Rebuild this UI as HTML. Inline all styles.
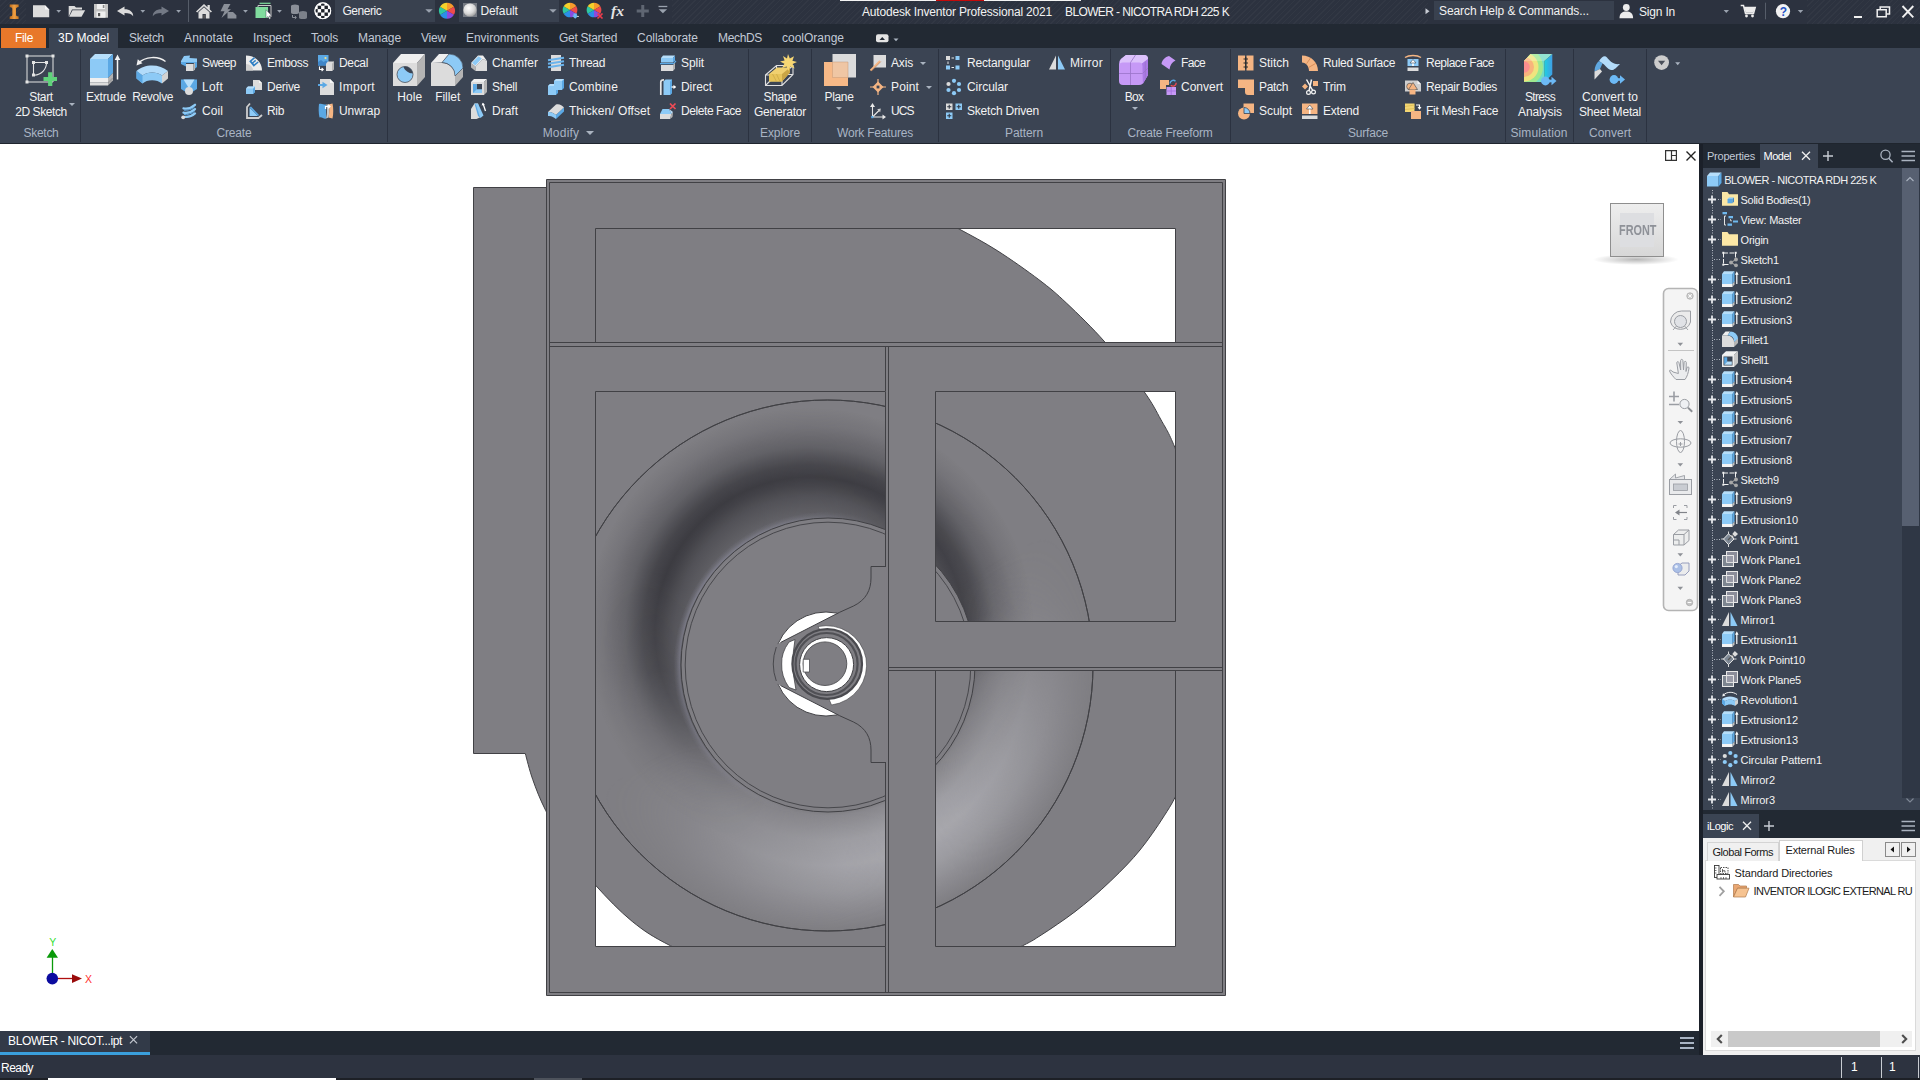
<!DOCTYPE html>
<html><head><meta charset="utf-8"><title>Autodesk Inventor Professional 2021</title>
<style>
html,body{margin:0;padding:0;}
body{width:1920px;height:1080px;overflow:hidden;background:#fff;position:relative;font-family:"Liberation Sans",sans-serif;}
#root{position:absolute;left:0;top:0;width:1920px;height:1080px;overflow:hidden;}
#root div,#root span,#root svg{position:absolute;display:block;}
#root span{white-space:nowrap;}
</style></head><body><div id="root">
<div style="left:0px;top:144px;width:1699px;height:887px;background:#ffffff;"></div>
<svg style="left:0;top:144px" width="1700" height="887" viewBox="0 144 1700 887">
<path d="M473.5,187.5 V753.5 H525.3 C526.5,757.7 529.4,770.2 532.8,779.7 C536.2,789.2 539.7,798.6 545.6,810.3 C551.5,822.0 559.7,837.5 568.0,850.0 C576.3,862.5 584.9,873.4 595.6,885.3 C606.3,897.2 619.7,911.3 632.2,921.4 C644.7,931.5 652.3,936.5 670.6,945.8 C688.9,955.1 716.1,969.5 742.0,977.4 C767.9,985.3 797.6,991.4 826.0,993.0 C854.4,994.6 888.8,990.9 912.6,987.1 C936.4,983.4 950.7,977.4 969.0,970.5 C987.3,963.6 1010.7,951.6 1022.5,945.8 C1034.3,940.0 1034.2,939.4 1040.0,935.8 C1045.8,932.2 1051.7,928.2 1057.5,924.2 C1063.3,920.2 1069.2,916.2 1075.0,911.7 C1080.8,907.2 1086.5,902.6 1092.5,897.5 C1098.5,892.4 1105.1,886.2 1110.8,880.8 C1116.5,875.4 1121.8,870.1 1126.7,865.0 C1131.6,859.9 1135.7,855.3 1140.0,850.0 C1144.3,844.7 1148.5,839.0 1152.5,833.3 C1156.5,827.6 1160.5,821.8 1164.2,815.8 C1168.0,809.8 1171.0,805.6 1175.0,797.5 C1179.0,789.4 1184.0,778.2 1188.5,767.0 C1193.0,755.8 1197.6,747.5 1202.2,730.3 C1206.8,713.1 1213.6,686.5 1216.0,664.0 C1218.4,641.5 1218.4,618.1 1216.5,595.1 C1214.6,572.1 1211.6,550.8 1204.7,526.2 C1197.8,501.7 1182.3,465.5 1175.0,447.8 C1167.7,430.1 1166.3,429.4 1161.1,420.0 C1155.9,410.6 1153.2,404.4 1143.9,391.4 C1134.6,378.4 1117.9,356.9 1105.0,342.2 C1092.1,327.5 1077.7,313.7 1066.7,303.3 C1055.7,292.9 1050.5,288.5 1038.9,279.7 C1027.3,270.9 1010.7,259.2 997.2,250.6 C983.7,242.0 971.5,235.7 957.8,228.3 C944.1,220.9 928.0,212.8 915.0,206.0 C902.0,199.2 885.8,190.6 880.0,187.5 Z" fill="#7f7e83" stroke="#414145" stroke-width="1"/>
<circle cx="827.5" cy="665.5" r="265.5" fill="#7f7e83" stroke="#414145" stroke-width="1"/>
</svg>
<div style="left:562.0px;top:400.0px;width:531.0px;height:531.0px;border-radius:50%;background:radial-gradient(circle 300px at 248.0px 232.0px, rgba(32,32,38,.22) 100.0px, rgba(32,32,38,.30) 115.0px, rgba(32,32,38,.47) 135.0px, rgba(32,32,38,.64) 148.0px, rgba(32,32,38,.70) 155.0px, rgba(32,32,38,.60) 167.0px, rgba(32,32,38,.31) 185.0px, rgba(32,32,38,.10) 207.0px, rgba(32,32,38,0) 224.0px);-webkit-mask-image:conic-gradient(from 328deg, #000 0deg, rgba(0,0,0,.97) 50deg, rgba(0,0,0,.88) 104deg, rgba(0,0,0,.55) 117deg, rgba(0,0,0,.3) 127deg, rgba(0,0,0,.15) 142deg, rgba(0,0,0,.05) 162deg, transparent 175deg, transparent 236deg, rgba(0,0,0,.1) 250deg, rgba(0,0,0,.27) 265deg, rgba(0,0,0,.52) 280deg, rgba(0,0,0,.82) 300deg, #000 330deg, #000 360deg);mask-image:conic-gradient(from 328deg, #000 0deg, rgba(0,0,0,.97) 50deg, rgba(0,0,0,.88) 104deg, rgba(0,0,0,.55) 117deg, rgba(0,0,0,.3) 127deg, rgba(0,0,0,.15) 142deg, rgba(0,0,0,.05) 162deg, transparent 175deg, transparent 236deg, rgba(0,0,0,.1) 250deg, rgba(0,0,0,.27) 265deg, rgba(0,0,0,.52) 280deg, rgba(0,0,0,.82) 300deg, #000 330deg, #000 360deg);"></div>
<div style="left:562.0px;top:400.0px;width:531.0px;height:531.0px;border-radius:50%;background:radial-gradient(circle closest-side, rgba(200,200,206,0) 54.99%, rgba(200,200,206,.15) 56.50%, rgba(200,200,206,.46) 65.91%, rgba(200,200,206,.56) 75.33%, rgba(200,200,206,.40) 84.75%, rgba(200,200,206,.14) 94.16%, rgba(200,200,206,0) 99.81%);-webkit-mask-image:conic-gradient(from 150deg, #000 0deg, rgba(0,0,0,.9) 25deg, rgba(0,0,0,.55) 50deg, rgba(0,0,0,.2) 72deg, transparent 92deg, transparent 268deg, rgba(0,0,0,.12) 285deg, rgba(0,0,0,.38) 305deg, rgba(0,0,0,.72) 328deg, rgba(0,0,0,.95) 348deg, #000 360deg);mask-image:conic-gradient(from 150deg, #000 0deg, rgba(0,0,0,.9) 25deg, rgba(0,0,0,.55) 50deg, rgba(0,0,0,.2) 72deg, transparent 92deg, transparent 268deg, rgba(0,0,0,.12) 285deg, rgba(0,0,0,.38) 305deg, rgba(0,0,0,.72) 328deg, rgba(0,0,0,.95) 348deg, #000 360deg);"></div>
<div style="left:562.0px;top:400.0px;width:531.0px;height:531.0px;border-radius:50%;background:radial-gradient(circle closest-side, rgba(170,170,195,0) 55.18%, rgba(170,170,195,.38) 55.74%, rgba(170,170,195,.15) 56.87%, rgba(170,170,195,0) 58.00%);-webkit-mask-image:conic-gradient(from 300deg, #000 0deg, rgba(0,0,0,.8) 40deg, transparent 80deg, transparent 250deg, rgba(0,0,0,.6) 300deg, #000 360deg);mask-image:conic-gradient(from 300deg, #000 0deg, rgba(0,0,0,.8) 40deg, transparent 80deg, transparent 250deg, rgba(0,0,0,.6) 300deg, #000 360deg);"></div>
<svg style="left:0;top:144px" width="1700" height="887" viewBox="0 144 1700 887">
<circle cx="827.5" cy="665.5" r="265.5" fill="none" stroke="#414145" stroke-width="1"/>
<circle cx="828" cy="665" r="147" fill="#7f7e83" stroke="#414145" stroke-width="1"/>
<circle cx="828" cy="665" r="142.8" fill="none" stroke="#414145" stroke-width="0.9"/>
<circle cx="826" cy="664" r="52" fill="#ffffff" stroke="#414145" stroke-width="1"/>
<path d="M768,649 L839.6,612.3 L853.5,606 C866,600 871,590 871,578 V566 H886 V762.5 H871 V750 C871,738 866,728 853.5,722 L839.6,715.7 L768,679 Z" fill="#7f7e83"/>
<path d="M780.5,642.5 L839.6,612.3 L853.5,606 C866,600 871,590 871,578 V566.5 H885.5 M780.5,685.5 L839.6,715.7 L853.5,722 C866,728 871,738 871,750 V762.5 H885.5" stroke="#414145" stroke-width="1" fill="none"/>
<path d="M776.3,647 A50.5,50.5 0 0 0 776.3,681" stroke="#414145" stroke-width="0.9" fill="none"/>
<path d="M789,642 Q781,653 781.7,664 Q781,676 789,687.5 L796,690 Q790.5,664 795,639.5 Z" fill="#ffffff" stroke="#414145" stroke-width="0.8"/>
<path d="M818,626.6 A40.3,40.3 0 0 1 866,658 A40.3,40.3 0 0 1 831.5,705 L829,699 A36,36 0 0 0 820,630 Z" fill="#ffffff" stroke="#414145" stroke-width="0.6"/>
<circle cx="827.2" cy="664" r="34.8" fill="#7f7e83" stroke="#4a4a4f" stroke-width="2.2"/>
<circle cx="826.6" cy="664" r="31" fill="none" stroke="#505055" stroke-width="2.2"/>
<circle cx="826.6" cy="664.6" r="27" fill="#ffffff" stroke="#414145" stroke-width="1"/>
<circle cx="825" cy="663.7" r="21.8" fill="#7f7e83" stroke="#414145" stroke-width="0.8"/>
<path d="M809.5,659.3 H803.2 V672 H809.5 Z" fill="#ffffff" stroke="#414145" stroke-width="0.7"/>
<path d="M546.5,179.5 H1225.5 V995.5 H546.5 Z M595.5,228.5 V342.5 H1175.5 V228.5 Z M595.5,391.5 V946.5 H885.5 V391.5 Z M935.5,391.5 V621.5 H1175.5 V391.5 Z M935.5,670.5 V946.5 H1175.5 V670.5 Z" fill="#7f7e83" fill-rule="evenodd" stroke="#414145" stroke-width="1"/>
<path d="M885.5,567 V762" stroke="#7f7e83" stroke-width="1.6"/>
<path d="M549.5,182.5 H1222.5 V992.5 H549.5 Z M549.5,342.5 H1222.5 M549.5,346.5 H1222.5 M888.5,346.5 V992.5 M885.5,346.5 V391 M885.5,946.5 V992.5 M888.5,667.5 H1222.5 M888.5,670.5 H1222.5" fill="none" stroke="#414145" stroke-width="1"/>
</svg>
<svg style="left:0;top:144px" width="1700" height="887" viewBox="0 144 1700 887">
<defs><radialGradient id="vsh" cx="0.5" cy="0.5" r="0.5"><stop offset="0" stop-color="#000" stop-opacity="0.28"/><stop offset="1" stop-color="#000" stop-opacity="0"/></radialGradient>
<linearGradient id="navg" x1="0" y1="0" x2="0" y2="1"><stop offset="0" stop-color="#f7f7f7"/><stop offset="1" stop-color="#ededed"/></linearGradient>
<linearGradient id="vcg" x1="0" y1="0" x2="0" y2="1"><stop offset="0" stop-color="#eeeeee"/><stop offset="1" stop-color="#d7d7d7"/></linearGradient></defs>
<path d="M1665.6,150.6 h10.8 v9.800 h-10.8 Z M1671.5,150.6 v9.800 M1671.5,155.5 h4.900" fill="none" stroke="#333" stroke-width="1.2"/>
<path d="M1686.5,151.5 l9,9 M1695.5,151.5 l-9,9" stroke="#222" stroke-width="1.4" fill="none"/>
<ellipse cx="1636" cy="259.500" rx="43" ry="5.500" fill="url(#vsh)"/>
<rect x="1610.5" y="203.5" width="53" height="53" fill="url(#vcg)" stroke="#8e8e8e" stroke-width="1"/>
<rect x="1620" y="213" width="34" height="34" fill="#dddee1"/>
<rect x="1663.5" y="288.5" width="34" height="322" rx="5" ry="5" fill="#f4f4f4" stroke="#b4b4b4" stroke-width="1.6"/>
<circle cx="1690" cy="296" r="3.2" fill="#d0d0d0" stroke="#a8a8a8" stroke-width="0.8"/><path d="M1688.3,294.3 l3.4,3.4 M1691.7,294.3 l-3.4,3.4" stroke="#fff" stroke-width="0.9"/>
<circle cx="1689.5" cy="602.5" r="3.2" fill="#c4c4c4" stroke="#a8a8a8" stroke-width="0.8"/><path d="M1687.6,602.5 h3.8" stroke="#fff" stroke-width="1"/>
<path d="M1670.5,322 a11,11 0 0 1 11,-11 h9 v11 a10.5,10.5 0 0 1 -20,0 Z" fill="#ebebeb" stroke="#9a9da3" stroke-width="1"/>
<circle cx="1680.5" cy="321.5" r="6" fill="#e0e2e6" stroke="#9a9da3" stroke-width="1"/>
<path d="M1676.5,326 l-3.5,4 M1684.5,326 l3.5,4" stroke="#9a9da3" stroke-width="0.9"/>
<path d="M1677.5,342.7 h5.6 l-2.8,3.2 Z" fill="#8e9197"/>
<path d="M1677.5,420.9 h5.6 l-2.8,3.2 Z" fill="#8e9197"/>
<path d="M1677.5,463.2 h5.6 l-2.8,3.2 Z" fill="#8e9197"/>
<path d="M1677.5,553.3 h5.6 l-2.8,3.2 Z" fill="#8e9197"/>
<path d="M1677.5,586.8 h5.6 l-2.8,3.2 Z" fill="#8e9197"/>
<path d="M1668,350.5 h26" stroke="#c4c4c4" stroke-width="1"/>
<path d="M1673,372 c-2,-2 -3.5,-2.5 -3.5,-1 c1,2.5 4,6 6.5,8.5 h9 c2,-2.5 3.5,-7 4,-11.5 c0,-1.5 -1.8,-1.5 -2.2,0 l-0.8,3.5 l0.3,-9 c0,-1.5 -2,-1.5 -2.2,0 l-0.6,7.5 l-0.6,-9.5 c-0.2,-1.5 -2.2,-1.5 -2.3,0 l0.1,9.5 l-1.8,-7.5 c-0.4,-1.4 -2.3,-1 -2.1,0.5 l1.6,10.5 Z" fill="#ebecee" stroke="#9a9da3" stroke-width="1" stroke-linejoin="round"/>
<path d="M1669,396.5 h10 M1674,391.5 v10 M1669,404.5 h10" stroke="#9a9da3" stroke-width="1.6" fill="none"/>
<circle cx="1684.5" cy="404" r="4.6" fill="#eef0f3" stroke="#9a9da3" stroke-width="1"/><path d="M1688,407.6 l4.2,4.2" stroke="#8b8e94" stroke-width="2"/>
<ellipse cx="1680.5" cy="443" rx="10.5" ry="4.2" fill="none" stroke="#9a9da3" stroke-width="1"/><ellipse cx="1680.5" cy="441.5" rx="4" ry="11" fill="none" stroke="#9a9da3" stroke-width="1"/>
<path d="M1678.5,444 h4 M1680.5,442 v4" stroke="#9a9da3" stroke-width="1"/>
<path d="M1669.5,479.5 l6,-5.5 v4 l9,-2.5 v4" fill="#e4e5e8" stroke="#9a9da3" stroke-width="0.9"/>
<rect x="1669.5" y="479.5" width="22" height="15" fill="#e9eaec" stroke="#9a9da3" stroke-width="1"/><rect x="1673.5" y="484" width="14" height="6.5" fill="#c9ccd2" stroke="#9a9da3" stroke-width="0.8"/>
<path d="M1673.5,508 v-2.5 h3 M1684,505.5 h3 v2.5 M1673.5,517 v2.5 h3 M1684,519.5 h3 v-2.5" fill="none" stroke="#9a9da3" stroke-width="1"/>
<path d="M1677,512.5 h10" stroke="#808389" stroke-width="1.2"/><path d="M1675,512.5 l4.5,-3 v6 Z" fill="#808389"/>
<path d="M1673.5,534.5 l5,-4.5 h10.5 v10.5 l-5,4.5 h-10.5 Z M1673.5,534.5 h10.5 v10.5 M1684,534.5 l5,-4.5 M1673.5,540 h5.5 v5" fill="#eceded" stroke="#9a9da3" stroke-width="1"/>
<path d="M1678,566 l4,-3 h7 v8 l-4,4 h-7 Z" fill="#ebeced" stroke="#8d95b8" stroke-width="0.9"/>
<circle cx="1677.5" cy="568" r="4.6" fill="#aabfe6" stroke="#8d9ccc" stroke-width="0.8"/><circle cx="1676.3" cy="566.6" r="1.6" fill="#e4ecfa"/>
<path d="M52.5,973 V957" stroke="#0a9a0a" stroke-width="1.3"/>
<path d="M52.3,949 L58,957.7 H46.6 Z" fill="#0a9a0a"/>
<path d="M58,978.5 H73" stroke="#b01010" stroke-width="1.3"/>
<path d="M82,978.6 L72,974.2 V983 Z" fill="#9a0b0b"/>
<circle cx="52.3" cy="978.6" r="5.8" fill="#0b0b9f"/>
<text x="49.2" y="946" font-family="Liberation Sans, sans-serif" font-size="10.5" fill="#35e035">Y</text>
<text x="85" y="982.6" font-family="Liberation Sans, sans-serif" font-size="10.5" fill="#ff3030">X</text>
</svg>
<span style="left:1618.7px;top:221.3px;font-size:15px;line-height:18px;font-weight:700;color:#8e9198;transform-origin:0 0;transform:scaleX(0.7242);">FRONT</span>
<div style="left:0px;top:0px;width:1920px;height:24px;background:#2c323f;"></div>
<div style="left:0px;top:0;width:26px;height:24px;background:repeating-linear-gradient(135deg,rgba(255,255,255,0.028) 0 1px,rgba(0,0,0,0) 1px 4px);"></div>
<div style="left:672px;top:0;width:756px;height:24px;background:repeating-linear-gradient(135deg,rgba(255,255,255,0.028) 0 1px,rgba(0,0,0,0) 1px 4px);"></div>
<div style="left:1807px;top:0;width:113px;height:24px;background:repeating-linear-gradient(135deg,rgba(255,255,255,0.028) 0 1px,rgba(0,0,0,0) 1px 4px);"></div>
<div style="left:840px;top:0px;width:241px;height:1px;background:#f4f4f4;"></div>
<div style="left:936px;top:0px;width:48px;height:1px;background:#c40a0a;"></div>
<div style="left:335px;top:0px;width:100px;height:22px;background:#39414f;"></div>
<div style="left:459px;top:0px;width:100px;height:22px;background:#39414f;"></div>
<div style="left:1434px;top:1px;width:180px;height:19px;background:#39414f;"></div>
<svg style="left:0;top:0" width="1920" height="24" viewBox="0 0 1920 24">
<defs><linearGradient id="ilg" x1="0" y1="0" x2="1" y2="0"><stop offset="0" stop-color="#b8691a"/><stop offset="0.5" stop-color="#f0a044"/><stop offset="1" stop-color="#c87820"/></linearGradient><radialGradient id="sph" cx="0.4" cy="0.35" r="0.7"><stop offset="0" stop-color="#ffffff"/><stop offset="0.6" stop-color="#d8d8d8"/><stop offset="1" stop-color="#9a9a9a"/></radialGradient></defs>
<path d="M9.7,4.4 H18.6 V7 C16.5,7 16,8 16,9 V14.500 C16,15.500 16.5,16.5 18.6,16.5 V19.1 H9.7 V16.5 C11.8,16.5 12.3,15.500 12.3,14.500 V9 C12.3,8 11.8,7 9.7,7 Z" fill="url(#ilg)"/>
<path d="M33,5.3 H45 L49.2,9.5 V17.2 H33 Z" fill="#dcdcdc"/><path d="M45,5.3 L49.2,9.5 H45 Z" fill="#f6f6f6"/>
<path d="M68.700,6 H74.500 L76,7.500 H82 V9.500 H72 L68.700,16.8 Z" fill="#dcdcdc"/><path d="M72.500,10.3 H85.200 L81.500,16.8 H69.200 Z" fill="#dcdcdc"/>
<path d="M94,4 H108 V17.7 H94 Z" fill="#c4c4c4"/><rect x="97" y="4" width="8" height="5" fill="#f0f0f0"/><rect x="96.5" y="11.500" width="9" height="6.2" fill="#efefef"/><rect x="98" y="13" width="2.2" height="3.2" fill="#555"/><rect x="102.8" y="5" width="1.6" height="3" fill="#888"/>
<path d="M117,11 L124.500,6.500 V9.300 C130,9.300 133.200,12 133.200,16.3 C131.500,13.800 129,12.900 124.500,12.900 V15.600 Z" fill="#dcdcdc"/>
<path d="M169,11 L161.500,6.500 V9.300 C156,9.300 152.800,12 152.800,16.3 C154.500,13.800 157,12.900 161.500,12.900 V15.600 Z" fill="#737985"/>
<path d="M56.300000000000004,10 h4.800 l-2.400,2.800 Z" fill="#9aa2ae"/>
<path d="M140.4,10 h4.800 l-2.400,2.800 Z" fill="#9aa2ae"/>
<path d="M176.2,10 h4.800 l-2.400,2.800 Z" fill="#9aa2ae"/>
<path d="M243.1,10 h4.800 l-2.400,2.800 Z" fill="#9aa2ae"/>
<path d="M277.1,10 h4.800 l-2.400,2.800 Z" fill="#9aa2ae"/>
<path d="M188.5,0 V22" stroke="#565d69" stroke-width="1"/>
<path d="M196,11.500 L204,4 L207.500,7.200 V5 H209.800 V9.400 L212,11.500 L210.800,12.600 L204,6.300 L197.200,12.600 Z" fill="#dcdcdc"/><path d="M198.500,12.300 L204,7.300 L209.500,12.300 V18.600 H205.800 V14 H202.500 V18.600 H198.500 Z" fill="#dcdcdc"/><rect x="203.200" y="14.800" width="2" height="3.800" fill="#555"/>
<path d="M224,4 H230.500 L227.500,9.300 H231 L221.500,18 L224.500,11.300 H220.500 Z" fill="#8a8f98"/><path d="M227.500,12 H233 L236.400,15.300 V18.600 H227.500 Z" fill="#8a8f98"/>
<path d="M259.500,3.300 H270.500" stroke="#80dc9e" stroke-width="1.2"/><path d="M258,5.500 H271 V17 H258 Z" fill="none" stroke="#c8c8c8" stroke-width="1"/><rect x="255.500" y="7" width="12.500" height="11" fill="#80dc9e"/>
<path d="M266,9.800 V18.200 L268,16.400 L269.400,19.300 L270.600,18.700 L269.300,15.900 L271.800,15.700 Z" fill="#ffffff" stroke="#2a303c" stroke-width="0.4"/>
<path d="M291,6 a4,1.600 0 0 1 8,0 v6.500 a4,1.600 0 0 1 -8,0 Z" fill="#8a8f98"/><path d="M299,12.500 a4,1.600 0 0 1 8,0 v5 a4,1.600 0 0 1 -8,0 Z" fill="#7c818a"/><path d="M292.500,15 v2.500 h3.500 M294.800,16 l1.600,1.500 l-1.600,1.500" stroke="#8a8f98" stroke-width="1" fill="none"/>
<defs><clipPath id="cbc"><circle cx="322.800" cy="10.800" r="7.700"/></clipPath></defs>
<circle cx="322.800" cy="10.800" r="8.300" fill="#ffffff"/><g clip-path="url(#cbc)">
<rect x="310.90" y="-1.10" width="3.4" height="3.4" fill="#1f232b"/>
<rect x="310.90" y="5.70" width="3.4" height="3.4" fill="#1f232b"/>
<rect x="310.90" y="12.50" width="3.4" height="3.4" fill="#1f232b"/>
<rect x="310.90" y="19.30" width="3.4" height="3.4" fill="#1f232b"/>
<rect x="314.30" y="2.30" width="3.4" height="3.4" fill="#1f232b"/>
<rect x="314.30" y="9.10" width="3.4" height="3.4" fill="#1f232b"/>
<rect x="314.30" y="15.90" width="3.4" height="3.4" fill="#1f232b"/>
<rect x="317.70" y="-1.10" width="3.4" height="3.4" fill="#1f232b"/>
<rect x="317.70" y="5.70" width="3.4" height="3.4" fill="#1f232b"/>
<rect x="317.70" y="12.50" width="3.4" height="3.4" fill="#1f232b"/>
<rect x="317.70" y="19.30" width="3.4" height="3.4" fill="#1f232b"/>
<rect x="321.10" y="2.30" width="3.4" height="3.4" fill="#1f232b"/>
<rect x="321.10" y="9.10" width="3.4" height="3.4" fill="#1f232b"/>
<rect x="321.10" y="15.90" width="3.4" height="3.4" fill="#1f232b"/>
<rect x="324.50" y="-1.10" width="3.4" height="3.4" fill="#1f232b"/>
<rect x="324.50" y="5.70" width="3.4" height="3.4" fill="#1f232b"/>
<rect x="324.50" y="12.50" width="3.4" height="3.4" fill="#1f232b"/>
<rect x="324.50" y="19.30" width="3.4" height="3.4" fill="#1f232b"/>
<rect x="327.90" y="2.30" width="3.4" height="3.4" fill="#1f232b"/>
<rect x="327.90" y="9.10" width="3.4" height="3.4" fill="#1f232b"/>
<rect x="327.90" y="15.90" width="3.4" height="3.4" fill="#1f232b"/>
<rect x="331.30" y="-1.10" width="3.4" height="3.4" fill="#1f232b"/>
<rect x="331.30" y="5.70" width="3.4" height="3.4" fill="#1f232b"/>
<rect x="331.30" y="12.50" width="3.4" height="3.4" fill="#1f232b"/>
<rect x="331.30" y="19.30" width="3.4" height="3.4" fill="#1f232b"/>
</g><circle cx="322.800" cy="10.800" r="7.900" fill="none" stroke="#ffffff" stroke-width="1.100"/>
</svg>
<svg style="left:0;top:0" width="1920" height="24" viewBox="0 0 1920 24">
<path d="M425.300,9.200 h7.400 l-3.700,3.600 Z" fill="#9aa2ae"/><path d="M549.300,9.200 h7.400 l-3.700,3.600 Z" fill="#9aa2ae"/>
<path d="M447,10.7 L447.00,2.70 A8,8 0 0 1 453.93,6.70 Z" fill="#f79a2b"/><path d="M447,10.7 L453.93,6.70 A8,8 0 0 1 453.93,14.70 Z" fill="#ef4b4b"/><path d="M447,10.7 L453.93,14.70 A8,8 0 0 1 447.00,18.70 Z" fill="#8a4be0"/><path d="M447,10.7 L447.00,18.70 A8,8 0 0 1 440.07,14.70 Z" fill="#2b8fe8"/><path d="M447,10.7 L440.07,14.70 A8,8 0 0 1 440.07,6.70 Z" fill="#2fc7a0"/><path d="M447,10.7 L440.07,6.70 A8,8 0 0 1 447.00,2.70 Z" fill="#f4d02b"/>
<rect x="463" y="3" width="14" height="14" fill="#767b84"/><circle cx="470" cy="10" r="6.600" fill="url(#sph)"/>
<path d="M570,10 L570.00,2.70 A7.3,7.3 0 0 1 576.32,6.35 Z" fill="#f79a2b"/><path d="M570,10 L576.32,6.35 A7.3,7.3 0 0 1 576.32,13.65 Z" fill="#ef4b4b"/><path d="M570,10 L576.32,13.65 A7.3,7.3 0 0 1 570.00,17.30 Z" fill="#8a4be0"/><path d="M570,10 L570.00,17.30 A7.3,7.3 0 0 1 563.68,13.65 Z" fill="#2b8fe8"/><path d="M570,10 L563.68,13.65 A7.3,7.3 0 0 1 563.68,6.35 Z" fill="#2fc7a0"/><path d="M570,10 L563.68,6.35 A7.3,7.3 0 0 1 570.00,2.70 Z" fill="#f4d02b"/>
<path d="M573.500,13.500 h3.400 v2.300 h1.500 l-3.200,3 l-3.200,-3 h1.500 Z" fill="#6bb8f0"/><path d="M577,16.500 h2" stroke="#ddd" stroke-width="0.8"/>
<path d="M594,10 L594.00,2.70 A7.3,7.3 0 0 1 600.32,6.35 Z" fill="#f79a2b"/><path d="M594,10 L600.32,6.35 A7.3,7.3 0 0 1 600.32,13.65 Z" fill="#ef4b4b"/><path d="M594,10 L600.32,13.65 A7.3,7.3 0 0 1 594.00,17.30 Z" fill="#8a4be0"/><path d="M594,10 L594.00,17.30 A7.3,7.3 0 0 1 587.68,13.65 Z" fill="#2b8fe8"/><path d="M594,10 L587.68,13.65 A7.3,7.3 0 0 1 587.68,6.35 Z" fill="#2fc7a0"/><path d="M594,10 L587.68,6.35 A7.3,7.3 0 0 1 594.00,2.70 Z" fill="#f4d02b"/>
<path d="M597.500,13.500 L602.500,18.500 M602.500,13.500 L597.500,18.500" stroke="#ef3b4b" stroke-width="1.700"/>
<text x="611" y="16" font-family="Liberation Serif, serif" font-style="italic" font-weight="bold" font-size="15.5" fill="#e4e4e4">fx</text>
<path d="M636.700,11 H648.800 M642.750,5 V17" stroke="#5f6672" stroke-width="3"/>
<path d="M658.500,6.500 h8.800" stroke="#9aa2ae" stroke-width="1.300"/><path d="M658.700,9.300 h8.400 l-4.200,4 Z" fill="#9aa2ae"/>
<path d="M1425.500,8.300 L1429.500,11.300 L1425.500,14.300 Z" fill="#c8ccd4"/>
<circle cx="1626.300" cy="7.500" r="3.400" fill="#ececec"/><path d="M1619.500,18.300 C1619.500,13 1622.500,11.500 1626.300,11.500 C1630.100,11.500 1633.100,13 1633.100,18.300 Z" fill="#ececec"/>
<path d="M1723.600,10 h5.400 l-2.700,3 Z" fill="#9aa2ae"/><path d="M1797.800,10 h5.400 l-2.700,3 Z" fill="#9aa2ae"/>
<path d="M1740.700,5.500 H1743.500 L1745.500,13.500 H1753.500 L1755.200,7.500 H1744.200" fill="none" stroke="#ececec" stroke-width="1.500"/><circle cx="1746.500" cy="16" r="1.400" fill="#ececec"/><circle cx="1752.500" cy="16" r="1.400" fill="#ececec"/><path d="M1744.500,8 H1754.800 L1753.300,12.800 H1745.700 Z" fill="#ececec"/>
<path d="M1765.500,2.700 V19.300" stroke="#565d69" stroke-width="1"/>
<circle cx="1783" cy="11.200" r="7.100" fill="#f2f2f2"/><text x="1779.700" y="15.600" font-family="Liberation Sans, sans-serif" font-weight="bold" font-size="12" fill="#2453c4">?</text>
<path d="M1854,17 H1862" stroke="#f0f0f0" stroke-width="2"/>
<path d="M1877.200,9.700 H1886.200 V16.700 H1877.200 Z" fill="none" stroke="#f0f0f0" stroke-width="1.500"/><path d="M1880.200,9.500 V7 H1889.500 V14 H1886.500" fill="none" stroke="#f0f0f0" stroke-width="1.500"/>
<path d="M1902.500,6 L1913.300,17.300 M1913.300,6 L1902.500,17.300" stroke="#f0f0f0" stroke-width="1.900"/>
</svg>
<span style="left:862px;top:4px;font-size:12px;line-height:16px;color:#f2f2f2;letter-spacing:-0.173px;">Autodesk Inventor Professional 2021</span>
<span style="left:1065px;top:4px;font-size:12px;line-height:16px;color:#f2f2f2;letter-spacing:-0.616px;">BLOWER - NICOTRA RDH 225 K</span>
<span style="left:342.4px;top:3px;font-size:12px;line-height:16px;color:#f2f2f2;letter-spacing:-0.431px;">Generic</span>
<span style="left:480.5px;top:3px;font-size:12px;line-height:16px;color:#f2f2f2;letter-spacing:-0.117px;">Default</span>
<span style="left:1439px;top:3px;font-size:12px;line-height:16px;color:#f2f2f2;letter-spacing:-0.081px;">Search Help &amp; Commands...</span>
<span style="left:1639px;top:4px;font-size:12px;line-height:16px;color:#f2f2f2;letter-spacing:-0.192px;">Sign In</span>
<div style="left:0px;top:24px;width:1920px;height:24px;background:#222933;"></div>
<div style="left:1px;top:28px;width:45px;height:20px;background:#e8782a;"></div>
<div style="left:49px;top:28px;width:69px;height:20px;background:#3b4453;"></div>
<span style="left:15px;top:30px;font-size:12px;line-height:16px;color:#ffffff;letter-spacing:-0.336px;">File</span>
<span style="left:58px;top:30px;font-size:12px;line-height:16px;color:#ffffff;letter-spacing:-0.045px;">3D Model</span>
<span style="left:129px;top:30px;font-size:12px;line-height:16px;color:#c3cad6;letter-spacing:-0.279px;">Sketch</span>
<span style="left:184px;top:30px;font-size:12px;line-height:16px;color:#c3cad6;letter-spacing:0.123px;">Annotate</span>
<span style="left:253px;top:30px;font-size:12px;line-height:16px;color:#c3cad6;letter-spacing:-0.096px;">Inspect</span>
<span style="left:311px;top:30px;font-size:12px;line-height:16px;color:#c3cad6;letter-spacing:-0.203px;">Tools</span>
<span style="left:358px;top:30px;font-size:12px;line-height:16px;color:#c3cad6;letter-spacing:-0.060px;">Manage</span>
<span style="left:421px;top:30px;font-size:12px;line-height:16px;color:#c3cad6;letter-spacing:-0.199px;">View</span>
<span style="left:466px;top:30px;font-size:12px;line-height:16px;color:#c3cad6;letter-spacing:-0.030px;">Environments</span>
<span style="left:559px;top:30px;font-size:12px;line-height:16px;color:#c3cad6;letter-spacing:-0.303px;">Get Started</span>
<span style="left:637px;top:30px;font-size:12px;line-height:16px;color:#c3cad6;letter-spacing:-0.034px;">Collaborate</span>
<span style="left:718px;top:30px;font-size:12px;line-height:16px;color:#c3cad6;letter-spacing:-0.336px;">MechDS</span>
<span style="left:782px;top:30px;font-size:12px;line-height:16px;color:#c3cad6;letter-spacing:-0.003px;">coolOrange</span>
<svg style="left:870px;top:29px" width="34" height="20" viewBox="0 0 34 20"><rect x="6" y="5.300" width="12.500" height="8" rx="2" fill="#e4e4e4"/><path d="M9.500,11 L12.250,8 L15,11 Z" fill="#222933"/><path d="M23.500,9.500 h5 l-2.500,2.800 Z" fill="#aab3c0"/></svg>
<div style="left:0px;top:48px;width:1920px;height:95px;background:#3b4453;"></div>
<div style="left:0px;top:143px;width:1920px;height:1px;background:#1f252e;"></div>
<div style="left:80px;top:49px;width:1px;height:93px;background:#2b3240;"></div>
<div style="left:387px;top:49px;width:1px;height:93px;background:#2b3240;"></div>
<div style="left:748px;top:49px;width:1px;height:93px;background:#2b3240;"></div>
<div style="left:811px;top:49px;width:1px;height:93px;background:#2b3240;"></div>
<div style="left:938px;top:49px;width:1px;height:93px;background:#2b3240;"></div>
<div style="left:1110px;top:49px;width:1px;height:93px;background:#2b3240;"></div>
<div style="left:1230px;top:49px;width:1px;height:93px;background:#2b3240;"></div>
<div style="left:1505px;top:49px;width:1px;height:93px;background:#2b3240;"></div>
<div style="left:1573px;top:49px;width:1px;height:93px;background:#2b3240;"></div>
<div style="left:1646px;top:49px;width:1px;height:93px;background:#2b3240;"></div>
<span style="left:202px;top:55px;font-size:12px;line-height:16px;color:#f2f2f2;letter-spacing:-0.537px;">Sweep</span>
<svg style="left:180px;top:54px" width="18" height="18" viewBox="-1 -1 18 18"><path d="M0,6 3,1 9,0.5 8.5,3 16,3.5 16,7 0,7Z" fill="#8dcaf6" /><path d="M0,7 16,7 16,12 13,14.5 13,8 5,8 5,11.5 0,9Z" fill="#5ba8e4" /><path d="M5,9 12.5,9 12.5,16 5,16Z" fill="#dcdcdc" /><path d="M12.5,9 14,7.6 14,14.4 12.5,16Z" fill="#b4b4b4" /></svg>
<span style="left:202px;top:79px;font-size:12px;line-height:16px;color:#f2f2f2;letter-spacing:0.250px;">Loft</span>
<svg style="left:180px;top:78px" width="18" height="18" viewBox="-1 -1 18 18"><path d="M0,0.5 16,0.5 16,10 12,12.5 4,12.5 0,10Z" fill="#5ba8e4" /><path d="M2.5,0.5 13.5,0.5 8,9.5Z" fill="#b9e0fb" /><circle cx="8" cy="12" r="4" fill="#dcdcdc"/></svg>
<span style="left:202px;top:103px;font-size:12px;line-height:16px;color:#f2f2f2;letter-spacing:0.078px;">Coil</span>
<svg style="left:180px;top:102px" width="18" height="18" viewBox="-1 -1 18 18"><path d="M2.500,5.300 C6,6 11,4.500 14,1.800 M2.500,9.600 C6,10.300 11,8.800 14,6.100 M4,13.800 C7,14.300 11,13 14,10.400" stroke="#8dcaf6" stroke-width="2.300" fill="none" stroke-linecap="round"/><path d="M3,7.200 C6,7.700 11,6.400 13.500,4.200 M3,11.500 C6,12 11,10.700 13.500,8.500" stroke="#5ba8e4" stroke-width="1" fill="none"/><circle cx="2.200" cy="14.300" r="1.900" fill="#dcdcdc"/></svg>
<span style="left:267px;top:55px;font-size:12px;line-height:16px;color:#f2f2f2;letter-spacing:-0.391px;">Emboss</span>
<svg style="left:245px;top:54px" width="18" height="18" viewBox="-1 -1 18 18"><path d="M0,0.5 C9,0.5 16,7 16,15.5 L0,15.5 Z" fill="#ececec"/><path d="M0,9 C4,9 7,12 7,15.5 L0,15.5 Z" fill="#cfcfcf"/><g transform="translate(3.2,6.2) rotate(-40)"><path d="M0,0 h6.400 v1.500 h-4.600 v1.300 h3.700 v1.500 h-3.700 v1.300 h4.600 v1.500 h-6.400 Z" fill="#2f7fc4"/></g></svg>
<span style="left:267px;top:79px;font-size:12px;line-height:16px;color:#f2f2f2;letter-spacing:-0.281px;">Derive</span>
<svg style="left:245px;top:78px" width="18" height="18" viewBox="-1 -1 18 18"><path d="M7,1 13,1 16,4 16,11 7,11Z" fill="#dcdcdc" /><path d="M13,1 16,4 13,4Z" fill="#f8f8f8" /><path d="M0,9.5 2,7.5 9,7.5 9,13 7,15 0,15Z" fill="#8dcaf6" /><path d="M7,9.5 9,7.5 9,13 7,15Z" fill="#5ba8e4" /><path d="M0,9.5 2,7.5 9,7.5 7,9.5Z" fill="#b6defa" /></svg>
<span style="left:267px;top:103px;font-size:12px;line-height:16px;color:#f2f2f2;letter-spacing:-0.339px;">Rib</span>
<svg style="left:245px;top:102px" width="18" height="18" viewBox="-1 -1 18 18"><path d="M4,0.5 L1,4 L1,15 L12.5,15 L16,12" fill="none" stroke="#cfcfcf" stroke-width="1.8"/><path d="M3.5,4.5 3.5,13 12,13Z" fill="#8dcaf6" /><path d="M3.5,4.5 5,3.5 13,12 12,13Z" fill="#5ba8e4" /></svg>
<span style="left:339px;top:55px;font-size:12px;line-height:16px;color:#f2f2f2;letter-spacing:-0.338px;">Decal</span>
<svg style="left:317px;top:54px" width="18" height="18" viewBox="-1 -1 18 18"><path d="M0,0 10.5,0 10.5,10.5 0,10.5Z" fill="#5ba8e4" /><path d="M0,10.5 0,7 3,5 5.5,7 8,5.5 10.5,7.5 10.5,10.5Z" fill="#3f86c9" /><circle cx="7.5" cy="3" r="1.1" fill="#f3e08a"/><path d="M8,8.5 10,6.5 16,6.5 16,14 14,16 8,16Z" fill="#dcdcdc" /><path d="M14,8.5 16,6.5 16,14 14,16Z" fill="#b4b4b4" /><path d="M1.5,11.5 v3 h3.5 M3.6,13 l1.6,1.5 l-1.6,1.5" stroke="#fff" stroke-width="1.1" fill="none"/></svg>
<span style="left:339px;top:79px;font-size:12px;line-height:16px;color:#f2f2f2;letter-spacing:0.333px;">Import</span>
<svg style="left:317px;top:78px" width="18" height="18" viewBox="-1 -1 18 18"><path d="M2,0 12,0 16,4 16,16 2,16Z" fill="#dcdcdc" /><path d="M12,0 16,4 12,4Z" fill="#f8f8f8" /><path d="M0,6 h5" stroke="#5ba8e4" stroke-width="2"/><path d="M4.5,2.8 9.5,6 4.5,9.2Z" fill="#5ba8e4" /></svg>
<span style="left:339px;top:103px;font-size:12px;line-height:16px;color:#f2f2f2;letter-spacing:-0.060px;">Unwrap</span>
<svg style="left:317px;top:102px" width="18" height="18" viewBox="-1 -1 18 18"><path d="M1,1 C4,0 6,2 8,1.5 L8,15.5 C6,16.5 4,13.5 1.5,14.5 C0.5,10 0.5,5 1,1 Z" fill="#5ba8e4"/><path d="M8,1.5 C9,4 9.5,10 8,15.5 L10.5,14.5 C11.5,10 11.5,5 10.5,1.5 Z" fill="#c8c8c8"/><path d="M10.5,1.5 L14.5,0.5 C15.5,5 15.5,11 14.5,15.5 L10.5,14.5 C11.5,10 11.5,5 10.5,1.5 Z" fill="#f5b583"/><path d="M7.5,6 v-2.5 h4 M10,1.8 l2,1.7 l-2,1.7" stroke="#fff" stroke-width="1.2" fill="none"/></svg>
<span style="left:492px;top:55px;font-size:12px;line-height:16px;color:#f2f2f2;letter-spacing:-0.002px;">Chamfer</span>
<svg style="left:470px;top:54px" width="18" height="18" viewBox="-1 -1 18 18"><path d="M0,8 4.5,11.5 4.5,16 0,12.5Z" fill="#b4b4b4" /><path d="M4.5,11.5 12,4 16,6 16,16 4.5,16Z" fill="#dcdcdc" /><path d="M0,8 7,0.5 12,0.5 16,6 12,4 4.5,11.5Z" fill="#efefef" /><path d="M1,7.8 7.5,1.2 10.8,3.6 4.4,10.4Z" fill="#8dcaf6" /></svg>
<span style="left:492px;top:79px;font-size:12px;line-height:16px;color:#f2f2f2;letter-spacing:-0.338px;">Shell</span>
<svg style="left:470px;top:78px" width="18" height="18" viewBox="-1 -1 18 18"><path d="M0,3 3,0 16,0 13,3Z" fill="#efefef" /><path d="M13,3 16,0 16,13 13,16Z" fill="#b4b4b4" /><path d="M0,3 13,3 13,16 0,16Z" fill="#dcdcdc" /><path d="M2,5 11,5 11,14 2,14Z" fill="#8dcaf6" /><path d="M5.5,5 11,5 11,10.5 5.5,10.5Z" fill="#3b4453" /><path d="M2,5 5.5,5 5.5,10.5 11,10.5 11,14 2,14Z" fill="#8dcaf6" /><path d="M2,5 5.5,5 5.5,10.5 2,14Z" fill="#5ba8e4" /></svg>
<span style="left:492px;top:103px;font-size:12px;line-height:16px;color:#f2f2f2;letter-spacing:0.000px;">Draft</span>
<svg style="left:470px;top:102px" width="18" height="18" viewBox="-1 -1 18 18"><path d="M0,6 3.5,0.5 7,0.5 10,14 5.5,16 0,16Z" fill="#dcdcdc" /><path d="M3.5,0.5 7,0.5 12.5,12.5 9.5,15Z" fill="#8dcaf6" /><path d="M3.5,0.5 5,2 9.5,15 7,13Z" fill="#5ba8e4" /><path d="M12,0.5 L14.5,8" stroke="#fff" stroke-width="1.3"/><path d="M10.6,2.6 L11.6,-0.3 L13.9,1.8 Z" fill="#fff"/></svg>
<span style="left:569px;top:55px;font-size:12px;line-height:16px;color:#f2f2f2;letter-spacing:-0.336px;">Thread</span>
<svg style="left:547px;top:54px" width="18" height="18" viewBox="-1 -1 18 18"><path d="M3,0 13,0 13,16 3,16Z" fill="#dcdcdc" /><path d="M0,5.200 L16,2.700 M0,8.700 L16,6.200 M0,12.200 L16,9.700" stroke="#6bb4ec" stroke-width="2"/></svg>
<span style="left:569px;top:79px;font-size:12px;line-height:16px;color:#f2f2f2;letter-spacing:0.138px;">Combine</span>
<svg style="left:547px;top:78px" width="18" height="18" viewBox="-1 -1 18 18"><path d="M0,7 2,5 6,5 6,2 8,0 16,0 16,9 14,11 10,11 10,14 8,16 0,16Z" fill="#5ba8e4" /><path d="M0,7 8,7 8,16 0,16Z" fill="#8dcaf6" /><path d="M6,2 14,2 14,11 8,11 8,7 6,7Z" fill="#8dcaf6" /><path d="M6,2 8,0 16,0 14,2Z" fill="#b6defa" /><path d="M0,7 2,5 6,5 6,7Z" fill="#b6defa" /></svg>
<span style="left:569px;top:103px;font-size:12px;line-height:16px;color:#f2f2f2;letter-spacing:0.037px;">Thicken/ Offset</span>
<svg style="left:547px;top:102px" width="18" height="18" viewBox="-1 -1 18 18"><path d="M0,9 8,1.5 C11,0.5 14,2 16,4.5 L8,12 C6,10 3,8.5 0,9Z" fill="#dcdcdc" /><path d="M0,9 C3,8.5 6,10 8,12 L8,16 C6,14 3,12.5 0,13Z" fill="#8dcaf6" /><path d="M8,12 16,4.5 16,8.5 8,16Z" fill="#5ba8e4" /></svg>
<span style="left:681px;top:55px;font-size:12px;line-height:16px;color:#f2f2f2;letter-spacing:-0.069px;">Split</span>
<svg style="left:659px;top:54px" width="18" height="18" viewBox="-1 -1 18 18"><path d="M1,3 3,0.5 15,0.5 13,3Z" fill="#b6defa" /><path d="M1,3 13,3 13,7.5 1,7.5Z" fill="#8dcaf6" /><path d="M13,3 15,0.5 15,5.5 13,7.5Z" fill="#5ba8e4" /><path d="M0,8.6 L13.5,8.6 L16,6" stroke="#5ba8e4" stroke-width="1.2" fill="none"/><path d="M1,10 13,10 13,16 1,16Z" fill="#dcdcdc" /><path d="M13,10 15,7.8 15,13.8 13,16Z" fill="#b4b4b4" /></svg>
<span style="left:681px;top:79px;font-size:12px;line-height:16px;color:#f2f2f2;letter-spacing:-0.057px;">Direct</span>
<svg style="left:659px;top:78px" width="18" height="18" viewBox="-1 -1 18 18"><path d="M0.8,16 V3 C0.8,1.5 2,0.8 4,0.8" fill="none" stroke="#e4e4e4" stroke-width="1.7"/><path d="M3.5,2.5 5.5,0.5 12,0.5 12,14 10,16 3.5,16Z" fill="#8dcaf6" /><path d="M10,2.5 12,0.5 12,14 10,16Z" fill="#5ba8e4" /><path d="M11.5,8 h4" stroke="#fff" stroke-width="1.3"/><path d="M13.5,5.8 L16,8 L13.5,10.2 Z" fill="#fff"/></svg>
<span style="left:681px;top:103px;font-size:12px;line-height:16px;color:#f2f2f2;letter-spacing:-0.426px;">Delete Face</span>
<svg style="left:659px;top:102px" width="18" height="18" viewBox="-1 -1 18 18"><path d="M0,11 2.5,6 9,6 11.5,11Z" fill="#8dcaf6" /><path d="M0,11 11.5,11 10,16 0,16Z" fill="#dcdcdc" /><path d="M9,6 13,9 11.5,11Z" fill="#b6defa" /><path d="M11.5,11 13,9 12.5,14 10,16Z" fill="#b4b4b4" /><path d="M10,0.5 L15.5,6 M15.5,0.5 L10,6" stroke="#ef4b55" stroke-width="1.7"/></svg>
<span style="left:891px;top:55px;font-size:12px;line-height:16px;color:#f2f2f2;letter-spacing:-0.168px;">Axis</span>
<svg style="left:869px;top:54px" width="18" height="18" viewBox="-1 -1 18 18"><path d="M3.5,0 16,0 16,12.5 3.5,12.5Z" fill="#dcdcdc" /><path d="M0.5,15.5 L10,6" stroke="#f5b583" stroke-width="1.8"/><path d="M1.5,16 L10.8,6.6" stroke="#b4764a" stroke-width="0.6"/></svg>
<span style="left:891px;top:79px;font-size:12px;line-height:16px;color:#f2f2f2;letter-spacing:0.131px;">Point</span>
<svg style="left:869px;top:78px" width="18" height="18" viewBox="-1 -1 18 18"><path d="M8,0 V16 M0,8 H16" stroke="#f5b583" stroke-width="1.2"/><path d="M8,2.5 13.5,8 8,13.5 2.5,8Z" fill="#f5b583" /><rect x="6.6" y="6.6" width="2.8" height="2.8" fill="#3b4453"/></svg>
<span style="left:891px;top:103px;font-size:12px;line-height:16px;color:#f2f2f2;letter-spacing:-0.900px;">UCS</span>
<svg style="left:869px;top:102px" width="18" height="18" viewBox="-1 -1 18 18"><path d="M2.5,14 V2 M2.5,14 H14 M2.5,14 L9.5,7" stroke="#e8e8e8" stroke-width="1.1" fill="none"/><path d="M0,4 2.5,0 5,4Z" fill="#e8e8e8" /><path d="M12.5,11.5 16,14 12.5,16.5Z" fill="#e8e8e8" /><path d="M7.2,6.2 10.8,5.6 10.2,9.2Z" fill="#cfcfcf" /><rect x="1.2" y="13" width="2.2" height="2.2" fill="#5ba8e4"/></svg>
<span style="left:967px;top:55px;font-size:12px;line-height:16px;color:#f2f2f2;letter-spacing:-0.155px;">Rectangular</span>
<svg style="left:945px;top:54px" width="18" height="18" viewBox="-1 -1 18 18"><rect x="0" y="1" width="4" height="4" fill="#dcdcdc"/><rect x="9.5" y="1" width="4" height="4" fill="#8dcaf6"/><rect x="0" y="10.5" width="4" height="4" fill="#8dcaf6"/><rect x="9.5" y="10.5" width="4" height="4" fill="#8dcaf6"/><path d="M5.5,3 h2.5 M2,6.5 v2.5 M5.5,12.5 h2.5" stroke="#e8e8e8" stroke-width="1"/></svg>
<span style="left:967px;top:79px;font-size:12px;line-height:16px;color:#f2f2f2;letter-spacing:-0.045px;">Circular</span>
<svg style="left:945px;top:78px" width="18" height="18" viewBox="-1 -1 18 18"><circle cx="2.5" cy="5" r="2.1" fill="#dcdcdc"/><circle cx="8" cy="1.8" r="2.1" fill="#8dcaf6"/><circle cx="13" cy="5" r="2.1" fill="#8dcaf6"/><circle cx="13" cy="11" r="2.1" fill="#8dcaf6"/><circle cx="8" cy="14.2" r="2.1" fill="#8dcaf6"/><circle cx="2.5" cy="11" r="2.1" fill="#8dcaf6"/></svg>
<span style="left:967px;top:103px;font-size:12px;line-height:16px;color:#f2f2f2;letter-spacing:-0.207px;">Sketch Driven</span>
<svg style="left:945px;top:102px" width="18" height="18" viewBox="-1 -1 18 18"><rect x="0" y="0.5" width="6.5" height="6.5" fill="#dcdcdc"/><rect x="9.5" y="0.5" width="6.5" height="6.5" fill="#8dcaf6"/><rect x="0" y="9.5" width="6.5" height="6.5" fill="#8dcaf6"/><path d="M1.2,3.75 h4.1 M3.25,1.7 v4.1 M10.7,3.75 h4.1 M12.75,1.7 v4.1 M1.2,12.75 h4.1 M3.25,10.7 v4.1" stroke="#2f3744" stroke-width="1.1"/></svg>
<span style="left:1070px;top:55px;font-size:12px;line-height:16px;color:#f2f2f2;letter-spacing:0.276px;">Mirror</span>
<svg style="left:1048px;top:54px" width="18" height="18" viewBox="-1 -1 18 18"><path d="M0,14.5 7,14.5 7,0.5Z" fill="#dcdcdc" /><path d="M9,14.5 16,14.5 9,0.5Z" fill="#8dcaf6" /></svg>
<span style="left:1181px;top:55px;font-size:12px;line-height:16px;color:#f2f2f2;letter-spacing:-0.668px;">Face</span>
<svg style="left:1159px;top:54px" width="18" height="18" viewBox="-1 -1 18 18"><path d="M1.5,9 C2,5 5,2 9,1 L15.5,5.5 C12,7 10,10 9.5,14.5 Z" fill="#c699f6"/></svg>
<span style="left:1181px;top:79px;font-size:12px;line-height:16px;color:#f2f2f2;letter-spacing:-0.002px;">Convert</span>
<svg style="left:1159px;top:78px" width="18" height="18" viewBox="-1 -1 18 18"><path d="M0,1 9,1 9,6 6,6 6,10 0,10Z" fill="#f5b583" /><path d="M6.5,8 16,8 16,16 6.5,16Z" fill="#c699f6" /><path d="M6.5,12 h9.5 M11.2,8 v8" stroke="#a672e0" stroke-width="0.9"/><path d="M10,4.5 a3.2,3.2 0 0 1 5.5,-2.2" stroke="#5ba8e4" stroke-width="1.4" fill="none"/><path d="M16.2,3.8 a3.2,3.2 0 0 1 -5.4,2.4" stroke="#ef4b55" stroke-width="1.4" fill="none"/></svg>
<span style="left:1259px;top:55px;font-size:12px;line-height:16px;color:#f2f2f2;letter-spacing:0.000px;">Stitch</span>
<svg style="left:1237px;top:54px" width="18" height="18" viewBox="-1 -1 18 18"><path d="M0,0.5 7,0.5 7,15.5 0,15.5Z" fill="#f5b583" /><path d="M8.5,0.5 15.5,0.5 15.5,15.5 8.5,15.5Z" fill="#f5b583" /><path d="M7.75,2 V14 M5.5,4 h4.5 M5.5,8 h4.5 M5.5,12 h4.5" stroke="#2b2b2b" stroke-width="1"/></svg>
<span style="left:1259px;top:79px;font-size:12px;line-height:16px;color:#f2f2f2;letter-spacing:-0.334px;">Patch</span>
<svg style="left:1237px;top:78px" width="18" height="18" viewBox="-1 -1 18 18"><path d="M0,0.5 H16 V16 H10 C8,16 7,15 7,13 V9 H0 Z" fill="#f5b583"/></svg>
<span style="left:1259px;top:103px;font-size:12px;line-height:16px;color:#f2f2f2;letter-spacing:-0.057px;">Sculpt</span>
<svg style="left:1237px;top:102px" width="18" height="18" viewBox="-1 -1 18 18"><path d="M5.5,0.5 16,0.5 16,10 5.5,10Z" fill="#f5b583" /><circle cx="6" cy="10.5" r="6" fill="#f5b583"/><path d="M6,4.5 V10.5 H12 A6,6 0 0 0 6,4.5 Z" fill="#8dcaf6" stroke="#3b4453" stroke-width="0.8"/></svg>
<span style="left:1323px;top:55px;font-size:12px;line-height:16px;color:#f2f2f2;letter-spacing:-0.310px;">Ruled Surface</span>
<svg style="left:1301px;top:54px" width="18" height="18" viewBox="-1 -1 18 18"><path d="M0,0.5 C9,0.5 16,7 16,16 L7,16 C7,11 4,8 0,7.5 Z" fill="#f5b583"/><path d="M8.5,3 L4.5,8.8 M13.5,8.5 L6.5,12.5" stroke="#d58a55" stroke-width="0.9"/></svg>
<span style="left:1323px;top:79px;font-size:12px;line-height:16px;color:#f2f2f2;letter-spacing:-0.141px;">Trim</span>
<svg style="left:1301px;top:78px" width="18" height="18" viewBox="-1 -1 18 18"><path d="M0,7.5 3,4.5 6,7.5 3,10.5Z" fill="#f5b583" /><path d="M11,2 16,2 16,7 11,7Z" fill="#f5b583" /><path d="M4.5,0.5 L11,12 M9.5,0.5 L7,12" stroke="#f4f4f4" stroke-width="1.5"/><circle cx="6.5" cy="13.5" r="1.9" fill="none" stroke="#f4f4f4" stroke-width="1.2"/><circle cx="11.5" cy="13" r="1.9" fill="none" stroke="#f4f4f4" stroke-width="1.2"/></svg>
<span style="left:1323px;top:103px;font-size:12px;line-height:16px;color:#f2f2f2;letter-spacing:-0.224px;">Extend</span>
<svg style="left:1301px;top:102px" width="18" height="18" viewBox="-1 -1 18 18"><path d="M0,0.5 15.5,0.5 15.5,11 0,11Z" fill="#f5b583" /><path d="M0,12.5 15.5,12.5 15.5,16 0,16Z" fill="#dcdcdc" /><path d="M7.75,5 V11" stroke="#fff" stroke-width="1.6"/><path d="M7.75,2 L11,6 H4.5 Z" fill="#fff" stroke="#3b4453" stroke-width="0.6"/></svg>
<span style="left:1426px;top:55px;font-size:12px;line-height:16px;color:#f2f2f2;letter-spacing:-0.503px;">Replace Face</span>
<svg style="left:1404px;top:54px" width="18" height="18" viewBox="-1 -1 18 18"><path d="M0,2.5 C4,-0.3 12,-0.3 16,2.5" fill="none" stroke="#f5b583" stroke-width="1.5"/><path d="M2.5,4 13.5,4 13.5,11 2.5,11Z" fill="#8dcaf6" /><path d="M2.5,12.5 13.5,12.5 13.5,16 2.5,16Z" fill="#dcdcdc" /><path d="M8,7.5 V11" stroke="#fff" stroke-width="1.6"/><path d="M8,4.5 L11,8 H5 Z" fill="#fff" stroke="#3b4453" stroke-width="0.6"/></svg>
<span style="left:1426px;top:79px;font-size:12px;line-height:16px;color:#f2f2f2;letter-spacing:-0.337px;">Repair Bodies</span>
<svg style="left:1404px;top:78px" width="18" height="18" viewBox="-1 -1 18 18"><path d="M0,1.5 12.5,1.5 16,5 16,12.5 0,12.5Z" fill="#cfcfcf" /><path d="M12.5,1.5 16,5 12.5,5Z" fill="#f4f4f4" /><circle cx="5" cy="7.5" r="3.3" fill="#f5b583" stroke="#555" stroke-width="0.7"/><path d="M8,3.5 12.5,10.5 3.5,10.5Z" fill="#f5b583" stroke="#555" stroke-width="0.7"/><path d="M4.5,10.5 10.5,10.5 10.5,15.5 4.5,15.5Z" fill="#f5b583" /></svg>
<span style="left:1426px;top:103px;font-size:12px;line-height:16px;color:#f2f2f2;letter-spacing:-0.308px;">Fit Mesh Face</span>
<svg style="left:1404px;top:102px" width="18" height="18" viewBox="-1 -1 18 18"><path d="M0,0.5 9.5,0.5 9.5,9 0,9Z" fill="#f3d673" /><path d="M0,3.5 L9.5,2 M0,6.5 L9.5,5.5" stroke="#d8b850" stroke-width="0.7"/><path d="M6,8 16,8 16,16 6,16Z" fill="#f5b583" /><path d="M11,2 h3.5 v3.5 M13,4 l1.5,1.8 l1.5,-1.8" stroke="#fff" stroke-width="1.1" fill="none"/></svg>
<svg style="left:919px;top:61px" width="8" height="6" viewBox="0 0 8 6"><path d="M1,1 h6 l-3,3 Z" fill="#aab3c0"/></svg>
<svg style="left:925px;top:85px" width="8" height="6" viewBox="0 0 8 6"><path d="M1,1 h6 l-3,3 Z" fill="#aab3c0"/></svg>
<svg style="left:24px;top:53px" width="35" height="34" viewBox="-1 -1 35 34"><path d="M2,2 H28 V28 H2 Z" fill="none" stroke="#e4e4e4" stroke-width="1"/><rect x="0.5" y="0.5" width="3" height="3" fill="#e4e4e4"/><rect x="26.5" y="0.5" width="3" height="3" fill="#e4e4e4"/><rect x="0.5" y="26.5" width="3" height="3" fill="#e4e4e4"/><path d="M8.5,8.5 V21 M8.5,8.5 H21.5 M21.5,8.5 C21.5,15 17,20.5 9,21.3" fill="none" stroke="#e4e4e4" stroke-width="1.1"/><rect x="7" y="7" width="3" height="3" fill="#e4e4e4"/><rect x="20" y="7" width="3" height="3" fill="#e4e4e4"/><rect x="7" y="19.5" width="3" height="3" fill="#e4e4e4"/><path d="M18.5,25 H32 M25.2,18.2 V32" stroke="#5fd37a" stroke-width="4.2"/></svg>
<span style="left:29.25px;top:89px;font-size:12px;line-height:16px;color:#f2f2f2;letter-spacing:-0.366px;">Start</span>
<span style="left:15.149999999999999px;top:104px;font-size:12px;line-height:16px;color:#f2f2f2;letter-spacing:-0.405px;">2D Sketch</span>
<svg style="left:88px;top:53px" width="35" height="34" viewBox="-1 -1 35 34"><path d="M1,5 6,0 24,0 19,5Z" fill="#b6defa" /><path d="M1,5 19,5 19,24 1,24Z" fill="#8dcaf6" /><path d="M19,5 24,0 24,19 19,24Z" fill="#5ba8e4" /><path d="M1,24 19,24 19,28.5 1,28.5Z" fill="#efefef" /><path d="M19,24 24,19 24,23.5 19,28.5Z" fill="#b4b4b4" /><path d="M1,28.5 19,28.5 19,31.5 1,31.5Z" fill="#dcdcdc" /><path d="M19,28.5 24,23.5 24,26.5 19,31.5Z" fill="#a8a8a8" /><path d="M28.5,25.5 V4" stroke="#f4f4f4" stroke-width="1.5"/><path d="M28.5,0.5 L31.3,6 H25.7 Z" fill="#f4f4f4"/></svg>
<span style="left:86.0px;top:89px;font-size:12px;line-height:16px;color:#f2f2f2;letter-spacing:-0.192px;">Extrude</span>
<svg style="left:135px;top:53px" width="35" height="34" viewBox="-1 -1 35 34"><path d="M2.5,9 C9,2.5 22,1.5 29.5,7.5" fill="none" stroke="#f0f0f0" stroke-width="1.3"/><path d="M0.5,11.5 L1.8,5.2 L6.5,9.3 Z" fill="#f0f0f0"/><path d="M0.5,17 C8,9.5 24,9.5 32,17 L26,21.5 C21,17.5 11,17.5 6.5,21.5 Z" fill="#b2dbfa"/><path d="M0.5,17 L6.5,21.5 C11,17.5 21,17.5 26,21.5 L26,29.5 C21,25 11,25 6.5,29.5 L0.5,24.5 Z" fill="#8dcaf6"/><path d="M0.5,17 L6.5,21.5 L6.5,29.5 L0.5,24.5 Z" fill="#5ba8e4"/><path d="M26,21.5 L32,17 L32,24.5 L26,29.5 Z" fill="#d2d2d2"/></svg>
<span style="left:132.2px;top:89px;font-size:12px;line-height:16px;color:#f2f2f2;letter-spacing:-0.337px;">Revolve</span>
<svg style="left:392px;top:53px" width="35" height="34" viewBox="-1 -1 35 34"><path d="M0,9 8,0 32,0 24,9Z" fill="#efefef" /><path d="M24,9 32,0 32,23 24,32Z" fill="#b4b4b4" /><path d="M0,9 24,9 24,32 0,32Z" fill="#dcdcdc" /><circle cx="12" cy="20.5" r="8" fill="#8dcaf6" stroke="#4a4f59" stroke-width="0.8"/><path d="M10.5,12.7 A8,8 0 0 1 19.9,19.3 C16,19.5 11.8,16.8 10.5,12.7 Z" fill="#3b4453"/></svg>
<span style="left:397.2px;top:89px;font-size:12px;line-height:16px;color:#f2f2f2;letter-spacing:0.078px;">Hole</span>
<svg style="left:430px;top:53px" width="35" height="34" viewBox="-1 -1 35 34"><path d="M0,9 8,0 18,0 11,8.5Z" fill="#efefef" /><path d="M0,9 H11 A13,13 0 0 1 24,22 V32 H0 Z" fill="#dcdcdc"/><path d="M24,22 32,14 32,23 24,32Z" fill="#b4b4b4" /><path d="M11,8.5 L18,0 A14,14 0 0 1 32,14 L24,22 A13,13 0 0 0 11,8.5 Z" fill="#8dcaf6" stroke="#4a4f59" stroke-width="0.6"/></svg>
<span style="left:435.2px;top:89px;font-size:12px;line-height:16px;color:#f2f2f2;letter-spacing:-0.057px;">Fillet</span>
<svg style="left:763px;top:53px" width="35" height="34" viewBox="-1 -1 35 34"><path d="M1.5,21 L12.5,11.5 H29 V20.5 L18,31.5 H1.5 Z M1.5,21 H18 V31.5 M18,21 L29,11.5 M12.5,11.5 V20.5 L1.5,31.5 M12.5,20.5 H29" fill="none" stroke="#e0e0e0" stroke-width="1.1"/><path d="M5,20 13,13.5 26,13.5 26,18.5 18,27.5 5,27.5Z" fill="#f0d070" /><path d="M5,20 18,20 18,27.5 5,27.5Z" fill="#e7c45a" /><path d="M18,20 26,13.5 26,18.5 18,27.5Z" fill="#c9a545" /><path d="M8.5,20 L12.5,27.5 M12.5,20 L16,27.5" stroke="#c9a545" stroke-width="0.7"/><path d="M24,0 L25.8,4.6 L30,2.2 L28.4,6.8 L33,8 L28.6,10 L30.6,14.4 L26.2,12.6 L24.4,17 L22.6,12.4 L18,14 L20.4,9.8 L16,7.6 L20.6,6.6 L19,2 L23,4.6 Z" fill="#f7d774"/></svg>
<span style="left:763.5px;top:89px;font-size:12px;line-height:16px;color:#f2f2f2;letter-spacing:-0.338px;">Shape</span>
<span style="left:754.0px;top:104px;font-size:12px;line-height:16px;color:#f2f2f2;letter-spacing:-0.224px;">Generator</span>
<svg style="left:823px;top:53px" width="35" height="34" viewBox="-1 -1 35 34"><path d="M8.5,0 32,0 32,23.5 8.5,23.5Z" fill="#dcdcdc" /><path d="M0,8 24,8 24,32 0,32Z" fill="#f7b987" /><path d="M8.5,8 H24 V23.5 H8.5 Z" fill="#efc6a4" stroke="#c79a78" stroke-width="0.5"/></svg>
<span style="left:824.5px;top:89px;font-size:12px;line-height:16px;color:#f2f2f2;letter-spacing:-0.338px;">Plane</span>
<svg style="left:1117px;top:53px" width="35" height="34" viewBox="-1 -1 35 34"><path d="M3,5 L8,1 H26 Q30,1 30,5 V21 L25,29.5 Q23,31 21,31 H5 Q1,31 1,27 V10 Q1,6.5 3,5 Z" fill="#c699f6"/><path d="M3,5 L8,1 H26 Q30,1 30,5 L24,9.5 Q23,8.5 21,8.5 H5 Q3,8.500 2,9.5 Q1.5,6.5 3,5 Z" fill="#dcc2fb"/><path d="M24,9.5 L30,5 V21 L25,29.5 Q24.500,23 24.500,12 Z" fill="#ab7ae6"/><path d="M12.5,8.5 V31 M1,19.5 H24.5 M24.5,19.5 L30,14 M12.5,8.5 L17.5,1 M27.3,7.5 V25.5" stroke="#9b74c9" stroke-width="0.8" fill="none"/></svg>
<span style="left:1124.75px;top:89px;font-size:12px;line-height:16px;color:#f2f2f2;letter-spacing:-0.724px;">Box</span>
<svg style="left:1523px;top:53px" width="35" height="34" viewBox="-1 -1 35 34"><defs><clipPath id="stc"><path d="M0,7 L6.5,0 H28.3 L20.3,7 V28 H0 Z"/></clipPath><linearGradient id="stg" x1="0" y1="0" x2="1" y2="0"><stop offset="0" stop-color="#1fcfe0"/><stop offset="1" stop-color="#3f9fe6"/></linearGradient></defs><path d="M20.3,7 L28.3,0 V20.6 L20.3,28 Z" fill="url(#stg)"/><g clip-path="url(#stc)"><rect x="0" y="0" width="29" height="28" fill="#74dcc4"/><circle cx="0" cy="13" r="19" fill="#9ee88f"/><circle cx="0" cy="13" r="14.500" fill="#f0e47e"/><circle cx="0" cy="13" r="10" fill="#f9b47c"/><circle cx="0" cy="13" r="5.800" fill="#fd8e8e"/><path d="M0,7 L6.5,0 H28.3 L20.3,7 Z" fill="#ffffff" opacity="0.22"/></g><circle cx="21.400" cy="27" r="4.400" fill="#6cb9f5"/><path d="M25,27 h3.500" stroke="#6cb9f5" stroke-width="2.600"/><path d="M27.500,22.800 L32.500,27 L27.500,31.200 Z" fill="#6cb9f5"/></svg>
<span style="left:1525.0px;top:89px;font-size:12px;line-height:16px;color:#f2f2f2;letter-spacing:-0.667px;">Stress</span>
<span style="left:1518.0px;top:104px;font-size:12px;line-height:16px;color:#f2f2f2;letter-spacing:-0.086px;">Analysis</span>
<svg style="left:1593px;top:53px" width="35" height="34" viewBox="-1 -1 35 34"><path d="M5,7 C8,2 11,1 13,3.500 C16,7 19,11 26,10 C22,14 20,16.500 17,16 C13,15.500 11,10 8.500,9.500 Z" fill="#b3dcfa"/><path d="M5,7 L8.500,9.500 L6,15 L0.500,17.500 C0.500,12.500 2.500,9 5,7 Z" fill="#5fa8e0"/><path d="M0.500,17.500 L6,15 L8,17.500 L0.500,25.500 Z" fill="#dcdcdc"/><circle cx="20" cy="25.500" r="4.400" fill="#6cb9f5"/><path d="M23.500,25.500 h3.500" stroke="#6cb9f5" stroke-width="2.600"/><path d="M26,21.300 L31,25.500 L26,29.700 Z" fill="#6cb9f5"/></svg>
<span style="left:1582.0px;top:89px;font-size:12px;line-height:16px;color:#f2f2f2;letter-spacing:0.066px;">Convert to</span>
<span style="left:1579.0px;top:104px;font-size:12px;line-height:16px;color:#f2f2f2;letter-spacing:-0.183px;">Sheet Metal</span>
<svg style="left:68px;top:102px" width="8" height="6" viewBox="0 0 8 6"><path d="M1,1 h6 l-3,3 Z" fill="#aab3c0"/></svg>
<svg style="left:835px;top:106px" width="8" height="6" viewBox="0 0 8 6"><path d="M1,1 h6 l-3,3 Z" fill="#aab3c0"/></svg>
<svg style="left:1130.5px;top:106px" width="8" height="6" viewBox="0 0 8 6"><path d="M1,1 h6 l-3,3 Z" fill="#aab3c0"/></svg>
<svg style="left:1650px;top:52px" width="34" height="22" viewBox="0 0 34 22"><circle cx="11.600" cy="10.600" r="7.400" fill="#cdcdcd"/><path d="M8,8.700 h7.200 l-3.600,4.600 Z" fill="#4a4f59"/><path d="M25.200,10.300 h5 l-2.500,2.900 Z" fill="#aab3c0"/></svg>
<span style="left:23.5px;top:125px;font-size:12px;line-height:16px;color:#a9b4c4;letter-spacing:-0.279px;">Sketch</span>
<span style="left:216.5px;top:125px;font-size:12px;line-height:16px;color:#a9b4c4;letter-spacing:-0.169px;">Create</span>
<span style="left:542.65px;top:125px;font-size:12px;line-height:16px;color:#a9b4c4;letter-spacing:0.226px;">Modify</span>
<span style="left:760.0px;top:125px;font-size:12px;line-height:16px;color:#a9b4c4;letter-spacing:-0.098px;">Explore</span>
<span style="left:837.0px;top:125px;font-size:12px;line-height:16px;color:#a9b4c4;letter-spacing:-0.189px;">Work Features</span>
<span style="left:1005.0px;top:125px;font-size:12px;line-height:16px;color:#a9b4c4;letter-spacing:-0.096px;">Pattern</span>
<span style="left:1127.5px;top:125px;font-size:12px;line-height:16px;color:#a9b4c4;letter-spacing:-0.201px;">Create Freeform</span>
<span style="left:1348.0px;top:125px;font-size:12px;line-height:16px;color:#a9b4c4;letter-spacing:-0.192px;">Surface</span>
<span style="left:1510.5px;top:125px;font-size:12px;line-height:16px;color:#a9b4c4;letter-spacing:0.097px;">Simulation</span>
<span style="left:1589.0px;top:125px;font-size:12px;line-height:16px;color:#a9b4c4;letter-spacing:-0.002px;">Convert</span>
<svg style="left:585px;top:129px" width="10" height="8" viewBox="0 0 10 8"><path d="M1,2 h8 l-4,4 Z" fill="#aab3c0"/></svg>
<div style="left:1699px;top:144px;width:221px;height:911px;background:#222933;"></div>
<div style="left:1699px;top:144px;width:4px;height:911px;background:#1b2029;"></div>
<div style="left:1760px;top:144px;width:58px;height:24px;background:#3b4453;"></div>
<span style="left:1707px;top:148px;font-size:11px;line-height:16px;color:#c3cad6;letter-spacing:-0.216px;">Properties</span>
<span style="left:1763.5px;top:148px;font-size:11px;line-height:16px;color:#ffffff;letter-spacing:-0.494px;">Model</span>
<div style="left:1703px;top:168px;width:217px;height:642px;background:#3b4453;"></div>
<div style="left:1902px;top:168px;width:18px;height:630px;background:#2f3745;"></div>
<div style="left:1902px;top:168px;width:17px;height:358px;background:#576071;"></div>
<span style="left:1724.2px;top:172px;font-size:11px;line-height:16px;color:#f2f2f2;letter-spacing:-0.491px;">BLOWER - NICOTRA RDH 225 K</span>
<span style="left:1740.6px;top:192px;font-size:11px;line-height:16px;color:#f2f2f2;letter-spacing:-0.322px;">Solid Bodies(1)</span>
<span style="left:1740.6px;top:212px;font-size:11px;line-height:16px;color:#f2f2f2;letter-spacing:-0.199px;">View: Master</span>
<span style="left:1740.6px;top:232px;font-size:11px;line-height:16px;color:#f2f2f2;letter-spacing:-0.241px;">Origin</span>
<span style="left:1740.6px;top:252px;font-size:11px;line-height:16px;color:#f2f2f2;letter-spacing:-0.197px;">Sketch1</span>
<span style="left:1740.6px;top:272px;font-size:11px;line-height:16px;color:#f2f2f2;letter-spacing:-0.110px;">Extrusion1</span>
<span style="left:1740.6px;top:292px;font-size:11px;line-height:16px;color:#f2f2f2;letter-spacing:-0.060px;">Extrusion2</span>
<span style="left:1740.6px;top:312px;font-size:11px;line-height:16px;color:#f2f2f2;letter-spacing:-0.060px;">Extrusion3</span>
<span style="left:1740.6px;top:332px;font-size:11px;line-height:16px;color:#f2f2f2;letter-spacing:-0.178px;">Fillet1</span>
<span style="left:1740.6px;top:352px;font-size:11px;line-height:16px;color:#f2f2f2;letter-spacing:-0.416px;">Shell1</span>
<span style="left:1740.6px;top:372px;font-size:11px;line-height:16px;color:#f2f2f2;letter-spacing:-0.060px;">Extrusion4</span>
<span style="left:1740.6px;top:392px;font-size:11px;line-height:16px;color:#f2f2f2;letter-spacing:-0.060px;">Extrusion5</span>
<span style="left:1740.6px;top:412px;font-size:11px;line-height:16px;color:#f2f2f2;letter-spacing:-0.060px;">Extrusion6</span>
<span style="left:1740.6px;top:432px;font-size:11px;line-height:16px;color:#f2f2f2;letter-spacing:-0.060px;">Extrusion7</span>
<span style="left:1740.6px;top:452px;font-size:11px;line-height:16px;color:#f2f2f2;letter-spacing:-0.060px;">Extrusion8</span>
<span style="left:1740.6px;top:472px;font-size:11px;line-height:16px;color:#f2f2f2;letter-spacing:-0.197px;">Sketch9</span>
<span style="left:1740.6px;top:492px;font-size:11px;line-height:16px;color:#f2f2f2;letter-spacing:-0.060px;">Extrusion9</span>
<span style="left:1740.6px;top:512px;font-size:11px;line-height:16px;color:#f2f2f2;letter-spacing:-0.066px;">Extrusion10</span>
<span style="left:1740.6px;top:532px;font-size:11px;line-height:16px;color:#f2f2f2;letter-spacing:-0.121px;">Work Point1</span>
<span style="left:1740.6px;top:552px;font-size:11px;line-height:16px;color:#f2f2f2;letter-spacing:-0.218px;">Work Plane1</span>
<span style="left:1740.6px;top:572px;font-size:11px;line-height:16px;color:#f2f2f2;letter-spacing:-0.218px;">Work Plane2</span>
<span style="left:1740.6px;top:592px;font-size:11px;line-height:16px;color:#f2f2f2;letter-spacing:-0.218px;">Work Plane3</span>
<span style="left:1740.6px;top:612px;font-size:11px;line-height:16px;color:#f2f2f2;letter-spacing:-0.059px;">Mirror1</span>
<span style="left:1740.6px;top:632px;font-size:11px;line-height:16px;color:#f2f2f2;letter-spacing:0.008px;">Extrusion11</span>
<span style="left:1740.6px;top:652px;font-size:11px;line-height:16px;color:#f2f2f2;letter-spacing:-0.122px;">Work Point10</span>
<span style="left:1740.6px;top:672px;font-size:11px;line-height:16px;color:#f2f2f2;letter-spacing:-0.218px;">Work Plane5</span>
<span style="left:1740.6px;top:692px;font-size:11px;line-height:16px;color:#f2f2f2;letter-spacing:-0.066px;">Revolution1</span>
<span style="left:1740.6px;top:712px;font-size:11px;line-height:16px;color:#f2f2f2;letter-spacing:-0.066px;">Extrusion12</span>
<span style="left:1740.6px;top:732px;font-size:11px;line-height:16px;color:#f2f2f2;letter-spacing:-0.066px;">Extrusion13</span>
<span style="left:1740.6px;top:752px;font-size:11px;line-height:16px;color:#f2f2f2;letter-spacing:-0.068px;">Circular Pattern1</span>
<span style="left:1740.6px;top:772px;font-size:11px;line-height:16px;color:#f2f2f2;letter-spacing:-0.059px;">Mirror2</span>
<span style="left:1740.6px;top:792px;font-size:11px;line-height:16px;color:#f2f2f2;letter-spacing:-0.059px;">Mirror3</span>
<svg style="left:1703px;top:168px" width="199" height="642" viewBox="1703 168 199 642">
<path d="M1712.500,190 V810" stroke="#c9ced6" stroke-width="1" stroke-dasharray="1 1.500" opacity="0.85"/>
<g transform="translate(1707,172)"><path d="M0,4 3,0.500 14.500,0.500 11.500,4Z" fill="#b6defa" /><path d="M0,4 11.500,4 11.500,14.500 0,14.500Z" fill="#8dcaf6" /><path d="M11.500,4 14.500,0.500 14.500,11 11.500,14.500Z" fill="#5ba8e4" /></g>
<rect x="1707.500" y="194.5" width="9" height="10" fill="#3b4453"/>
<path d="M1708,199.5 H1716 M1712,195.5 V203.5" stroke="#e6e8ec" stroke-width="1.800"/>
<path d="M1718,199.5 H1721" stroke="#c9ced6" stroke-width="1" stroke-dasharray="1 1.500" opacity="0.85"/>
<g transform="translate(1722,191)"><path d="M0,1 H5.500 L7,3.200 H16 V14.800 H0 Z" fill="#fbe7a6"/><path d="M5.500,8 7,6.500 12,6.500 10.500,8Z" fill="#8dcaf6" /><path d="M5.500,8 10.500,8 10.500,12.300 5.500,12.300Z" fill="#5ba8e4" /><path d="M10.500,8 12,6.500 12,10.800 10.500,12.300Z" fill="#3f86c9" /></g>
<rect x="1707.500" y="214.5" width="9" height="10" fill="#3b4453"/>
<path d="M1708,219.5 H1716 M1712,215.5 V223.5" stroke="#e6e8ec" stroke-width="1.800"/>
<path d="M1718,219.5 H1721" stroke="#c9ced6" stroke-width="1" stroke-dasharray="1 1.500" opacity="0.85"/>
<g transform="translate(1722,211)"><path d="M4,5 H2.500 V14 H4" fill="none" stroke="#e4e4e4" stroke-width="1"/><rect x="0.500" y="1" width="4.500" height="2.300" fill="#6fb8ee"/><rect x="6.500" y="5" width="4.500" height="2.300" fill="#6fb8ee"/><rect x="11" y="9.500" width="5" height="2" fill="#6fb8ee"/><rect x="5.500" y="12.500" width="4.500" height="2.300" fill="#6fb8ee"/><path d="M8.500,8 V9.800 H10" stroke="#e4e4e4" stroke-width="0.8" fill="none"/></g>
<rect x="1707.500" y="234.5" width="9" height="10" fill="#3b4453"/>
<path d="M1708,239.5 H1716 M1712,235.5 V243.5" stroke="#e6e8ec" stroke-width="1.800"/>
<path d="M1718,239.5 H1721" stroke="#c9ced6" stroke-width="1" stroke-dasharray="1 1.500" opacity="0.85"/>
<g transform="translate(1722,231)"><path d="M0,1 H5.500 L7,3.200 H16 V14.800 H0 Z" fill="#fbe7a6"/></g>
<path d="M1714,259.5 H1721" stroke="#c9ced6" stroke-width="1" stroke-dasharray="1 1.500" opacity="0.85"/>
<g transform="translate(1722,251)"><path d="M1.500,2 H13.500 V7 M1.500,2 V13.500 H7.500" fill="none" stroke="#f0f0f0" stroke-width="1" stroke-dasharray="4.5 1.5"/><rect x="0.3" y="0.8" width="2" height="2" fill="#f0f0f0"/><rect x="12.7" y="0.8" width="2" height="2" fill="#f0f0f0"/><rect x="0.3" y="12.7" width="2" height="2" fill="#f0f0f0"/><path d="M14,8.500 L9,11.500 L14,14.500" stroke="#9a9a9a" stroke-width="1.100" fill="none"/><circle cx="14" cy="8.500" r="1.900" fill="#a8a8a8"/><circle cx="14" cy="14.300" r="1.900" fill="#a8a8a8"/><circle cx="9" cy="11.500" r="1.900" fill="#a8a8a8"/></g>
<rect x="1707.500" y="274.5" width="9" height="10" fill="#3b4453"/>
<path d="M1708,279.5 H1716 M1712,275.5 V283.5" stroke="#e6e8ec" stroke-width="1.800"/>
<path d="M1718,279.5 H1721" stroke="#c9ced6" stroke-width="1" stroke-dasharray="1 1.500" opacity="0.85"/>
<g transform="translate(1722,271)"><path d="M0,3 2,0.300 12.500,0.300 10.500,3Z" fill="#b6defa" /><path d="M0,3 10.500,3 10.500,13 0,13Z" fill="#8dcaf6" /><path d="M10.500,3 12.500,0.300 12.500,10.300 10.500,13Z" fill="#5ba8e4" /><path d="M0,13 10.500,13 10.500,16 0,16Z" fill="#f4f4f4" /><path d="M10.500,13 12.500,10.300 12.500,13.300 10.500,16Z" fill="#c4c4c4" /><path d="M14.800,13 V3" stroke="#ffffff" stroke-width="1.200"/><path d="M14.800,0.300 L16.600,3.800 H13 Z" fill="#ffffff"/></g>
<rect x="1707.500" y="294.5" width="9" height="10" fill="#3b4453"/>
<path d="M1708,299.5 H1716 M1712,295.5 V303.5" stroke="#e6e8ec" stroke-width="1.800"/>
<path d="M1718,299.5 H1721" stroke="#c9ced6" stroke-width="1" stroke-dasharray="1 1.500" opacity="0.85"/>
<g transform="translate(1722,291)"><path d="M0,3 2,0.300 12.500,0.300 10.500,3Z" fill="#b6defa" /><path d="M0,3 10.500,3 10.500,13 0,13Z" fill="#8dcaf6" /><path d="M10.500,3 12.500,0.300 12.500,10.300 10.500,13Z" fill="#5ba8e4" /><path d="M0,13 10.500,13 10.500,16 0,16Z" fill="#f4f4f4" /><path d="M10.500,13 12.500,10.300 12.500,13.300 10.500,16Z" fill="#c4c4c4" /><path d="M14.800,13 V3" stroke="#ffffff" stroke-width="1.200"/><path d="M14.800,0.300 L16.600,3.800 H13 Z" fill="#ffffff"/></g>
<rect x="1707.500" y="314.5" width="9" height="10" fill="#3b4453"/>
<path d="M1708,319.5 H1716 M1712,315.5 V323.5" stroke="#e6e8ec" stroke-width="1.800"/>
<path d="M1718,319.5 H1721" stroke="#c9ced6" stroke-width="1" stroke-dasharray="1 1.500" opacity="0.85"/>
<g transform="translate(1722,311)"><path d="M0,3 2,0.300 12.500,0.300 10.500,3Z" fill="#b6defa" /><path d="M0,3 10.500,3 10.500,13 0,13Z" fill="#8dcaf6" /><path d="M10.500,3 12.500,0.300 12.500,10.300 10.500,13Z" fill="#5ba8e4" /><path d="M0,13 10.500,13 10.500,16 0,16Z" fill="#f4f4f4" /><path d="M10.500,13 12.500,10.300 12.500,13.300 10.500,16Z" fill="#c4c4c4" /><path d="M14.800,13 V3" stroke="#ffffff" stroke-width="1.200"/><path d="M14.800,0.300 L16.600,3.800 H13 Z" fill="#ffffff"/></g>
<path d="M1714,339.5 H1721" stroke="#c9ced6" stroke-width="1" stroke-dasharray="1 1.500" opacity="0.85"/>
<g transform="translate(1722,331)"><path d="M0,4.500 3.500,0.500 8,0.500 5.500,4.500Z" fill="#efefef" /><path d="M0,4.500 H5.500 A6.500,6.500 0 0 1 12,11 V16 H0 Z" fill="#dcdcdc"/><path d="M12,11 16,7 16,12 12,16Z" fill="#b4b4b4" /><path d="M5.500,4.200 L8.500,0.500 A7.500,7.500 0 0 1 16,7.500 L12.300,11 A6.500,6.500 0 0 0 5.500,4.200 Z" fill="#8dcaf6"/></g>
<path d="M1714,359.5 H1721" stroke="#c9ced6" stroke-width="1" stroke-dasharray="1 1.500" opacity="0.85"/>
<g transform="translate(1722,351)"><path d="M0,4 4,0.300 16,0.300 12,4Z" fill="#f2f2f2" /><path d="M12,4 16,0.300 16,12 12,16Z" fill="#c8c8c8" /><path d="M0,4 12,4 12,16 0,16Z" fill="#ececec" /><path d="M1.500,5.500 10.500,5.500 10.500,14.500 1.500,14.500Z" fill="#3b4453" /><path d="M2.200,6.300 5.200,6.300 5.200,10.500 2.200,13.800Z" fill="#5ba8e4" /><path d="M2.200,13.800 5.200,10.500 9.800,10.500 9.800,13.800Z" fill="#b6defa" /></g>
<rect x="1707.500" y="374.5" width="9" height="10" fill="#3b4453"/>
<path d="M1708,379.5 H1716 M1712,375.5 V383.5" stroke="#e6e8ec" stroke-width="1.800"/>
<path d="M1718,379.5 H1721" stroke="#c9ced6" stroke-width="1" stroke-dasharray="1 1.500" opacity="0.85"/>
<g transform="translate(1722,371)"><path d="M0,3 2,0.300 12.500,0.300 10.500,3Z" fill="#b6defa" /><path d="M0,3 10.500,3 10.500,13 0,13Z" fill="#8dcaf6" /><path d="M10.500,3 12.500,0.300 12.500,10.300 10.500,13Z" fill="#5ba8e4" /><path d="M0,13 10.500,13 10.500,16 0,16Z" fill="#f4f4f4" /><path d="M10.500,13 12.500,10.300 12.500,13.300 10.500,16Z" fill="#c4c4c4" /><path d="M14.800,13 V3" stroke="#ffffff" stroke-width="1.200"/><path d="M14.800,0.300 L16.600,3.800 H13 Z" fill="#ffffff"/></g>
<rect x="1707.500" y="394.5" width="9" height="10" fill="#3b4453"/>
<path d="M1708,399.5 H1716 M1712,395.5 V403.5" stroke="#e6e8ec" stroke-width="1.800"/>
<path d="M1718,399.5 H1721" stroke="#c9ced6" stroke-width="1" stroke-dasharray="1 1.500" opacity="0.85"/>
<g transform="translate(1722,391)"><path d="M0,3 2,0.300 12.500,0.300 10.500,3Z" fill="#b6defa" /><path d="M0,3 10.500,3 10.500,13 0,13Z" fill="#8dcaf6" /><path d="M10.500,3 12.500,0.300 12.500,10.300 10.500,13Z" fill="#5ba8e4" /><path d="M0,13 10.500,13 10.500,16 0,16Z" fill="#f4f4f4" /><path d="M10.500,13 12.500,10.300 12.500,13.300 10.500,16Z" fill="#c4c4c4" /><path d="M14.800,13 V3" stroke="#ffffff" stroke-width="1.200"/><path d="M14.800,0.300 L16.600,3.800 H13 Z" fill="#ffffff"/></g>
<rect x="1707.500" y="414.5" width="9" height="10" fill="#3b4453"/>
<path d="M1708,419.5 H1716 M1712,415.5 V423.5" stroke="#e6e8ec" stroke-width="1.800"/>
<path d="M1718,419.5 H1721" stroke="#c9ced6" stroke-width="1" stroke-dasharray="1 1.500" opacity="0.85"/>
<g transform="translate(1722,411)"><path d="M0,3 2,0.300 12.500,0.300 10.500,3Z" fill="#b6defa" /><path d="M0,3 10.500,3 10.500,13 0,13Z" fill="#8dcaf6" /><path d="M10.500,3 12.500,0.300 12.500,10.300 10.500,13Z" fill="#5ba8e4" /><path d="M0,13 10.500,13 10.500,16 0,16Z" fill="#f4f4f4" /><path d="M10.500,13 12.500,10.300 12.500,13.300 10.500,16Z" fill="#c4c4c4" /><path d="M14.800,13 V3" stroke="#ffffff" stroke-width="1.200"/><path d="M14.800,0.300 L16.600,3.800 H13 Z" fill="#ffffff"/></g>
<rect x="1707.500" y="434.5" width="9" height="10" fill="#3b4453"/>
<path d="M1708,439.5 H1716 M1712,435.5 V443.5" stroke="#e6e8ec" stroke-width="1.800"/>
<path d="M1718,439.5 H1721" stroke="#c9ced6" stroke-width="1" stroke-dasharray="1 1.500" opacity="0.85"/>
<g transform="translate(1722,431)"><path d="M0,3 2,0.300 12.500,0.300 10.500,3Z" fill="#b6defa" /><path d="M0,3 10.500,3 10.500,13 0,13Z" fill="#8dcaf6" /><path d="M10.500,3 12.500,0.300 12.500,10.300 10.500,13Z" fill="#5ba8e4" /><path d="M0,13 10.500,13 10.500,16 0,16Z" fill="#f4f4f4" /><path d="M10.500,13 12.500,10.300 12.500,13.300 10.500,16Z" fill="#c4c4c4" /><path d="M14.800,13 V3" stroke="#ffffff" stroke-width="1.200"/><path d="M14.800,0.300 L16.600,3.800 H13 Z" fill="#ffffff"/></g>
<rect x="1707.500" y="454.5" width="9" height="10" fill="#3b4453"/>
<path d="M1708,459.5 H1716 M1712,455.5 V463.5" stroke="#e6e8ec" stroke-width="1.800"/>
<path d="M1718,459.5 H1721" stroke="#c9ced6" stroke-width="1" stroke-dasharray="1 1.500" opacity="0.85"/>
<g transform="translate(1722,451)"><path d="M0,3 2,0.300 12.500,0.300 10.500,3Z" fill="#b6defa" /><path d="M0,3 10.500,3 10.500,13 0,13Z" fill="#8dcaf6" /><path d="M10.500,3 12.500,0.300 12.500,10.300 10.500,13Z" fill="#5ba8e4" /><path d="M0,13 10.500,13 10.500,16 0,16Z" fill="#f4f4f4" /><path d="M10.500,13 12.500,10.300 12.500,13.300 10.500,16Z" fill="#c4c4c4" /><path d="M14.800,13 V3" stroke="#ffffff" stroke-width="1.200"/><path d="M14.800,0.300 L16.600,3.800 H13 Z" fill="#ffffff"/></g>
<path d="M1714,479.5 H1721" stroke="#c9ced6" stroke-width="1" stroke-dasharray="1 1.500" opacity="0.85"/>
<g transform="translate(1722,471)"><path d="M1.500,2 H13.500 V7 M1.500,2 V13.500 H7.500" fill="none" stroke="#f0f0f0" stroke-width="1" stroke-dasharray="4.5 1.5"/><rect x="0.3" y="0.8" width="2" height="2" fill="#f0f0f0"/><rect x="12.7" y="0.8" width="2" height="2" fill="#f0f0f0"/><rect x="0.3" y="12.7" width="2" height="2" fill="#f0f0f0"/><path d="M14,8.500 L9,11.500 L14,14.500" stroke="#9a9a9a" stroke-width="1.100" fill="none"/><circle cx="14" cy="8.500" r="1.900" fill="#a8a8a8"/><circle cx="14" cy="14.300" r="1.900" fill="#a8a8a8"/><circle cx="9" cy="11.500" r="1.900" fill="#a8a8a8"/></g>
<rect x="1707.500" y="494.5" width="9" height="10" fill="#3b4453"/>
<path d="M1708,499.5 H1716 M1712,495.5 V503.5" stroke="#e6e8ec" stroke-width="1.800"/>
<path d="M1718,499.5 H1721" stroke="#c9ced6" stroke-width="1" stroke-dasharray="1 1.500" opacity="0.85"/>
<g transform="translate(1722,491)"><path d="M0,3 2,0.300 12.500,0.300 10.500,3Z" fill="#b6defa" /><path d="M0,3 10.500,3 10.500,13 0,13Z" fill="#8dcaf6" /><path d="M10.500,3 12.500,0.300 12.500,10.300 10.500,13Z" fill="#5ba8e4" /><path d="M0,13 10.500,13 10.500,16 0,16Z" fill="#f4f4f4" /><path d="M10.500,13 12.500,10.300 12.500,13.300 10.500,16Z" fill="#c4c4c4" /><path d="M14.800,13 V3" stroke="#ffffff" stroke-width="1.200"/><path d="M14.800,0.300 L16.600,3.800 H13 Z" fill="#ffffff"/></g>
<rect x="1707.500" y="514.5" width="9" height="10" fill="#3b4453"/>
<path d="M1708,519.5 H1716 M1712,515.5 V523.5" stroke="#e6e8ec" stroke-width="1.800"/>
<path d="M1718,519.5 H1721" stroke="#c9ced6" stroke-width="1" stroke-dasharray="1 1.500" opacity="0.85"/>
<g transform="translate(1722,511)"><path d="M0,3 2,0.300 12.500,0.300 10.500,3Z" fill="#b6defa" /><path d="M0,3 10.500,3 10.500,13 0,13Z" fill="#8dcaf6" /><path d="M10.500,3 12.500,0.300 12.500,10.300 10.500,13Z" fill="#5ba8e4" /><path d="M0,13 10.500,13 10.500,16 0,16Z" fill="#f4f4f4" /><path d="M10.500,13 12.500,10.300 12.500,13.300 10.500,16Z" fill="#c4c4c4" /><path d="M14.800,13 V3" stroke="#ffffff" stroke-width="1.200"/><path d="M14.800,0.300 L16.600,3.800 H13 Z" fill="#ffffff"/></g>
<path d="M1714,539.5 H1721" stroke="#c9ced6" stroke-width="1" stroke-dasharray="1 1.500" opacity="0.85"/>
<g transform="translate(1722,531)"><path d="M6.500,0.500 V16 M-0.800,8 H14.500" stroke="#e8e8e8" stroke-width="0.9"/><path d="M6.500,2.800 L12,8 L6.500,13.600 L1.500,8 Z" fill="#7d8794" stroke="#e8e8e8" stroke-width="1"/><path d="M6,9 L11,4" stroke="#555" stroke-width="1.200"/><path d="M10.300,3 L12.800,0 L16,3 L13,5.800 Z" fill="#dcdcdc"/><path d="M9.300,4.600 L11.300,6.700" stroke="#dcdcdc" stroke-width="1.600"/></g>
<rect x="1707.500" y="554.5" width="9" height="10" fill="#3b4453"/>
<path d="M1708,559.5 H1716 M1712,555.5 V563.5" stroke="#e6e8ec" stroke-width="1.800"/>
<path d="M1718,559.5 H1721" stroke="#c9ced6" stroke-width="1" stroke-dasharray="1 1.500" opacity="0.85"/>
<g transform="translate(1722,551)"><rect x="4.500" y="0.500" width="11" height="11" fill="#8b8d9a" stroke="#e8e8e8" stroke-width="1"/><rect x="0.500" y="4.500" width="11" height="11" fill="#7d8590" stroke="#e8e8e8" stroke-width="1"/><path d="M4.500,4.500 V11.500 H11.500" fill="none" stroke="#e8e8e8" stroke-width="0.9"/><rect x="5" y="5" width="6" height="6" fill="#9a9ba8"/></g>
<rect x="1707.500" y="574.5" width="9" height="10" fill="#3b4453"/>
<path d="M1708,579.5 H1716 M1712,575.5 V583.5" stroke="#e6e8ec" stroke-width="1.800"/>
<path d="M1718,579.5 H1721" stroke="#c9ced6" stroke-width="1" stroke-dasharray="1 1.500" opacity="0.85"/>
<g transform="translate(1722,571)"><rect x="4.500" y="0.500" width="11" height="11" fill="#8b8d9a" stroke="#e8e8e8" stroke-width="1"/><rect x="0.500" y="4.500" width="11" height="11" fill="#7d8590" stroke="#e8e8e8" stroke-width="1"/><path d="M4.500,4.500 V11.500 H11.500" fill="none" stroke="#e8e8e8" stroke-width="0.9"/><rect x="5" y="5" width="6" height="6" fill="#9a9ba8"/></g>
<rect x="1707.500" y="594.5" width="9" height="10" fill="#3b4453"/>
<path d="M1708,599.5 H1716 M1712,595.5 V603.5" stroke="#e6e8ec" stroke-width="1.800"/>
<path d="M1718,599.5 H1721" stroke="#c9ced6" stroke-width="1" stroke-dasharray="1 1.500" opacity="0.85"/>
<g transform="translate(1722,591)"><rect x="4.500" y="0.500" width="11" height="11" fill="#8b8d9a" stroke="#e8e8e8" stroke-width="1"/><rect x="0.500" y="4.500" width="11" height="11" fill="#7d8590" stroke="#e8e8e8" stroke-width="1"/><path d="M4.500,4.500 V11.500 H11.500" fill="none" stroke="#e8e8e8" stroke-width="0.9"/><rect x="5" y="5" width="6" height="6" fill="#9a9ba8"/></g>
<rect x="1707.500" y="614.5" width="9" height="10" fill="#3b4453"/>
<path d="M1708,619.5 H1716 M1712,615.5 V623.5" stroke="#e6e8ec" stroke-width="1.800"/>
<path d="M1718,619.5 H1721" stroke="#c9ced6" stroke-width="1" stroke-dasharray="1 1.500" opacity="0.85"/>
<g transform="translate(1722,611)"><path d="M0,15 7,15 7,1Z" fill="#dcdcdc" /><path d="M8.500,15 15.500,15 8.500,1Z" fill="#8dcaf6" /></g>
<rect x="1707.500" y="634.5" width="9" height="10" fill="#3b4453"/>
<path d="M1708,639.5 H1716 M1712,635.5 V643.5" stroke="#e6e8ec" stroke-width="1.800"/>
<path d="M1718,639.5 H1721" stroke="#c9ced6" stroke-width="1" stroke-dasharray="1 1.500" opacity="0.85"/>
<g transform="translate(1722,631)"><path d="M0,3 2,0.300 12.500,0.300 10.500,3Z" fill="#b6defa" /><path d="M0,3 10.500,3 10.500,13 0,13Z" fill="#8dcaf6" /><path d="M10.500,3 12.500,0.300 12.500,10.300 10.500,13Z" fill="#5ba8e4" /><path d="M0,13 10.500,13 10.500,16 0,16Z" fill="#f4f4f4" /><path d="M10.500,13 12.500,10.300 12.500,13.300 10.500,16Z" fill="#c4c4c4" /><path d="M14.800,13 V3" stroke="#ffffff" stroke-width="1.200"/><path d="M14.800,0.300 L16.600,3.800 H13 Z" fill="#ffffff"/></g>
<path d="M1714,659.5 H1721" stroke="#c9ced6" stroke-width="1" stroke-dasharray="1 1.500" opacity="0.85"/>
<g transform="translate(1722,651)"><path d="M6.500,0.500 V16 M-0.800,8 H14.500" stroke="#e8e8e8" stroke-width="0.9"/><path d="M6.500,2.800 L12,8 L6.500,13.600 L1.500,8 Z" fill="#7d8794" stroke="#e8e8e8" stroke-width="1"/><path d="M6,9 L11,4" stroke="#555" stroke-width="1.200"/><path d="M10.300,3 L12.800,0 L16,3 L13,5.800 Z" fill="#dcdcdc"/><path d="M9.300,4.600 L11.300,6.700" stroke="#dcdcdc" stroke-width="1.600"/></g>
<rect x="1707.500" y="674.5" width="9" height="10" fill="#3b4453"/>
<path d="M1708,679.5 H1716 M1712,675.5 V683.5" stroke="#e6e8ec" stroke-width="1.800"/>
<path d="M1718,679.5 H1721" stroke="#c9ced6" stroke-width="1" stroke-dasharray="1 1.500" opacity="0.85"/>
<g transform="translate(1722,671)"><rect x="4.500" y="0.500" width="11" height="11" fill="#8b8d9a" stroke="#e8e8e8" stroke-width="1"/><rect x="0.500" y="4.500" width="11" height="11" fill="#7d8590" stroke="#e8e8e8" stroke-width="1"/><path d="M4.500,4.500 V11.500 H11.500" fill="none" stroke="#e8e8e8" stroke-width="0.9"/><rect x="5" y="5" width="6" height="6" fill="#9a9ba8"/></g>
<rect x="1707.500" y="694.5" width="9" height="10" fill="#3b4453"/>
<path d="M1708,699.5 H1716 M1712,695.5 V703.5" stroke="#e6e8ec" stroke-width="1.800"/>
<path d="M1718,699.5 H1721" stroke="#c9ced6" stroke-width="1" stroke-dasharray="1 1.500" opacity="0.85"/>
<g transform="translate(1722,691)"><path d="M1.500,4 C5,0.500 11,0.500 15,3.500" fill="none" stroke="#f0f0f0" stroke-width="1"/><path d="M0.300,5.500 L1,2.200 L3.500,4.500 Z" fill="#f0f0f0"/><path d="M0,8 C4,4.500 12,4.500 16,8 L13,10.200 C10.500,8.300 5.500,8.300 3,10.200 Z" fill="#b2dbfa"/><path d="M0,8 L3,10.200 C5.500,8.300 10.500,8.300 13,10.200 V15 C10.500,13 5.500,13 3,15 L0,12.500 Z" fill="#8dcaf6"/><path d="M0,8 L3,10.200 V15 L0,12.500 Z" fill="#5ba8e4"/><path d="M13,10.200 L16,8 V12.500 L13,15 Z" fill="#d2d2d2"/></g>
<rect x="1707.500" y="714.5" width="9" height="10" fill="#3b4453"/>
<path d="M1708,719.5 H1716 M1712,715.5 V723.5" stroke="#e6e8ec" stroke-width="1.800"/>
<path d="M1718,719.5 H1721" stroke="#c9ced6" stroke-width="1" stroke-dasharray="1 1.500" opacity="0.85"/>
<g transform="translate(1722,711)"><path d="M0,3 2,0.300 12.500,0.300 10.500,3Z" fill="#b6defa" /><path d="M0,3 10.500,3 10.500,13 0,13Z" fill="#8dcaf6" /><path d="M10.500,3 12.500,0.300 12.500,10.300 10.500,13Z" fill="#5ba8e4" /><path d="M0,13 10.500,13 10.500,16 0,16Z" fill="#f4f4f4" /><path d="M10.500,13 12.500,10.300 12.500,13.300 10.500,16Z" fill="#c4c4c4" /><path d="M14.800,13 V3" stroke="#ffffff" stroke-width="1.200"/><path d="M14.800,0.300 L16.600,3.800 H13 Z" fill="#ffffff"/></g>
<rect x="1707.500" y="734.5" width="9" height="10" fill="#3b4453"/>
<path d="M1708,739.5 H1716 M1712,735.5 V743.5" stroke="#e6e8ec" stroke-width="1.800"/>
<path d="M1718,739.5 H1721" stroke="#c9ced6" stroke-width="1" stroke-dasharray="1 1.500" opacity="0.85"/>
<g transform="translate(1722,731)"><path d="M0,3 2,0.300 12.500,0.300 10.500,3Z" fill="#b6defa" /><path d="M0,3 10.500,3 10.500,13 0,13Z" fill="#8dcaf6" /><path d="M10.500,3 12.500,0.300 12.500,10.300 10.500,13Z" fill="#5ba8e4" /><path d="M0,13 10.500,13 10.500,16 0,16Z" fill="#f4f4f4" /><path d="M10.500,13 12.500,10.300 12.500,13.300 10.500,16Z" fill="#c4c4c4" /><path d="M14.800,13 V3" stroke="#ffffff" stroke-width="1.200"/><path d="M14.800,0.300 L16.600,3.800 H13 Z" fill="#ffffff"/></g>
<rect x="1707.500" y="754.5" width="9" height="10" fill="#3b4453"/>
<path d="M1708,759.5 H1716 M1712,755.5 V763.5" stroke="#e6e8ec" stroke-width="1.800"/>
<path d="M1718,759.5 H1721" stroke="#c9ced6" stroke-width="1" stroke-dasharray="1 1.500" opacity="0.85"/>
<g transform="translate(1722,751)"><circle cx="2.800" cy="5" r="2.100" fill="#dcdcdc"/><circle cx="8.300" cy="2" r="2.100" fill="#8dcaf6"/><circle cx="13.600" cy="5" r="2.100" fill="#8dcaf6"/><circle cx="13.600" cy="11" r="2.100" fill="#8dcaf6"/><circle cx="8.300" cy="14.200" r="2.100" fill="#8dcaf6"/><circle cx="2.800" cy="11" r="2.100" fill="#8dcaf6"/></g>
<rect x="1707.500" y="774.5" width="9" height="10" fill="#3b4453"/>
<path d="M1708,779.5 H1716 M1712,775.5 V783.5" stroke="#e6e8ec" stroke-width="1.800"/>
<path d="M1718,779.5 H1721" stroke="#c9ced6" stroke-width="1" stroke-dasharray="1 1.500" opacity="0.85"/>
<g transform="translate(1722,771)"><path d="M0,15 7,15 7,1Z" fill="#dcdcdc" /><path d="M8.500,15 15.500,15 8.500,1Z" fill="#8dcaf6" /></g>
<rect x="1707.500" y="794.5" width="9" height="10" fill="#3b4453"/>
<path d="M1708,799.5 H1716 M1712,795.5 V803.5" stroke="#e6e8ec" stroke-width="1.800"/>
<path d="M1718,799.5 H1721" stroke="#c9ced6" stroke-width="1" stroke-dasharray="1 1.500" opacity="0.85"/>
<g transform="translate(1722,791)"><path d="M0,15 7,15 7,1Z" fill="#dcdcdc" /><path d="M8.500,15 15.500,15 8.500,1Z" fill="#8dcaf6" /></g>
</svg>
<div style="left:1703px;top:814px;width:56px;height:24px;background:#3b4453;"></div>
<span style="left:1707px;top:818px;font-size:11px;line-height:16px;color:#ffffff;letter-spacing:-0.458px;">iLogic</span>
<svg style="left:1700px;top:144px" width="220" height="700" viewBox="1700 144 220 700">
<path d="M1802,151.800 L1810,159.800 M1810,151.800 L1802,159.800" stroke="#f0f0f0" stroke-width="1.300"/>
<path d="M1823,156 H1833 M1828,151 V161" stroke="#c8ccd4" stroke-width="1.400"/>
<circle cx="1885.500" cy="154.800" r="4.600" fill="none" stroke="#aab3c0" stroke-width="1.300"/><path d="M1888.800,158.300 L1892.600,162.300" stroke="#aab3c0" stroke-width="1.500"/>
<path d="M1901.500,151.500 H1915 M1901.500,156 H1915 M1901.500,160.500 H1915" stroke="#aab3c0" stroke-width="1.500"/>
<path d="M1743,821.800 L1751,829.800 M1751,821.800 L1743,829.800" stroke="#f0f0f0" stroke-width="1.300"/>
<path d="M1764,826 H1774 M1769,821 V831" stroke="#c8ccd4" stroke-width="1.400"/>
<path d="M1901.500,821.500 H1915 M1901.500,826 H1915 M1901.500,830.500 H1915" stroke="#aab3c0" stroke-width="1.500"/>
<path d="M1906.500,181 L1910,177.500 L1913.500,181" fill="none" stroke="#aab3c0" stroke-width="1.100"/>
<path d="M1906.500,798.500 L1910,802 L1913.500,798.500" fill="none" stroke="#7f8896" stroke-width="1.100"/>
</svg>
<div style="left:1703px;top:838px;width:217px;height:217px;background:#f0f0f0;"></div>
<div style="left:1705px;top:860px;width:211px;height:191px;background:#ffffff;border:1px solid #dadada;box-sizing:border-box;"></div>
<div style="left:1707px;top:842px;width:72px;height:19px;background:#f0f0f0;border:1px solid #d4d4d4;border-bottom:none;box-sizing:border-box;"></div>
<div style="left:1779px;top:840px;width:84px;height:21px;background:#ffffff;border:1px solid #d0d0d0;border-bottom:none;box-sizing:border-box;"></div>
<span style="left:1712.5px;top:844px;font-size:11px;line-height:16px;color:#1a1a1a;letter-spacing:-0.461px;">Global Forms</span>
<span style="left:1785.5px;top:842px;font-size:11px;line-height:16px;color:#1a1a1a;letter-spacing:-0.183px;">External Rules</span>
<span style="left:1734.5px;top:865px;font-size:11px;line-height:16px;color:#1a1a1a;letter-spacing:-0.116px;">Standard Directories</span>
<span style="left:1753.5px;top:883px;font-size:11px;line-height:16px;color:#1a1a1a;letter-spacing:-0.674px;">INVENTOR ILOGIC EXTERNAL RU</span>
<svg style="left:1703px;top:838px" width="217" height="217" viewBox="1703 838 217 217">
<rect x="1885.500" y="842.500" width="14" height="14" fill="#f0f0f0" stroke="#8a8a8a" stroke-width="1"/><rect x="1901.500" y="842.500" width="14" height="14" fill="#f0f0f0" stroke="#8a8a8a" stroke-width="1"/>
<path d="M1894,846.500 V852.500 L1890.500,849.500 Z" fill="#111"/><path d="M1907,846.500 V852.500 L1910.500,849.500 Z" fill="#111"/>
<rect x="1714.500" y="865.500" width="4.500" height="12" fill="#ffffff" stroke="#3a3a3a" stroke-width="0.9"/><rect x="1717" y="874.500" width="12.500" height="4.500" fill="#ffffff" stroke="#3a3a3a" stroke-width="0.9"/>
<path d="M1714.500,868 h2 M1714.500,870.500 h2 M1714.500,873 h2 M1721,879 v-2 M1723.500,879 v-2 M1726,879 v-2" stroke="#3a3a3a" stroke-width="0.7"/>
<path d="M1720.500,867.500 h7.500 v6 h-7.500 Z" fill="none" stroke="#3a3a3a" stroke-width="0.9" stroke-dasharray="1.500 1"/><path d="M1722.500,869 v3.500 M1722.500,870.800 h2.500 v1.700" stroke="#3a3a3a" stroke-width="0.8" fill="none"/>
<path d="M1719.500,886.800 L1723.800,891.300 L1719.500,895.800" fill="none" stroke="#a0a0a0" stroke-width="1.800"/>
<path d="M1733.500,884.500 H1738.500 L1740,886 H1746.500 V888.200 H1737.500 L1733.500,897 Z" fill="#eaa773" stroke="#b07a4a" stroke-width="0.7"/><path d="M1737.500,888.200 H1749 L1745.500,897 H1733.500 Z" fill="#f6c391" stroke="#b07a4a" stroke-width="0.7"/>
<rect x="1711" y="1031" width="201" height="16" fill="#f0f0f0"/><rect x="1728" y="1031" width="152" height="16" fill="#c9c9c9"/>
<path d="M1721.800,1035 L1717.800,1039 L1721.800,1043" fill="none" stroke="#4d4d4d" stroke-width="2.100"/><path d="M1902.200,1035 L1906.200,1039 L1902.200,1043" fill="none" stroke="#4d4d4d" stroke-width="2.100"/>
</svg>
<div style="left:0px;top:1031px;width:1699px;height:24px;background:#222933;"></div>
<div style="left:0px;top:1031px;width:150px;height:24px;background:#323a48;"></div>
<div style="left:0px;top:1052px;width:150px;height:3px;background:#3a9fdc;"></div>
<span style="left:8px;top:1033px;font-size:12px;line-height:16px;color:#ffffff;letter-spacing:-0.366px;">BLOWER - NICOT...ipt</span>
<svg style="left:126px;top:1033px" width="16" height="16" viewBox="0 0 16 16"><path d="M3.900,3.100 L11.100,10.300 M11.100,3.100 L3.900,10.300" stroke="#c4c8d0" stroke-width="1.200"/></svg><svg style="left:1678px;top:1034px" width="18" height="18" viewBox="0 0 18 18"><path d="M2,4 H16 M2,9 H16 M2,14 H16" stroke="#a9b4c4" stroke-width="2"/></svg>
<div style="left:0px;top:1055px;width:1920px;height:23px;background:#2d3340;"></div>
<span style="left:1px;top:1060px;font-size:12px;line-height:16px;color:#ffffff;letter-spacing:-0.537px;">Ready</span>
<div style="left:1841px;top:1057px;width:1px;height:21px;background:#c8ccd2;"></div>
<div style="left:1881px;top:1057px;width:1px;height:21px;background:#c8ccd2;"></div>
<div style="left:1918px;top:1057px;width:1px;height:21px;background:#c8ccd2;"></div>
<span style="left:1851px;top:1059px;font-size:12px;line-height:16px;color:#ffffff;letter-spacing:0.000px;">1</span>
<span style="left:1889px;top:1059px;font-size:12px;line-height:16px;color:#ffffff;letter-spacing:0.000px;">1</span>
<div style="left:0px;top:1078px;width:1920px;height:2px;background:#1d2026;"></div>
<div style="left:48px;top:1078px;width:288px;height:2px;background:#ffffff;"></div>
<div style="left:534px;top:1078px;width:48px;height:2px;background:#4d525b;"></div>
</div></body></html>
